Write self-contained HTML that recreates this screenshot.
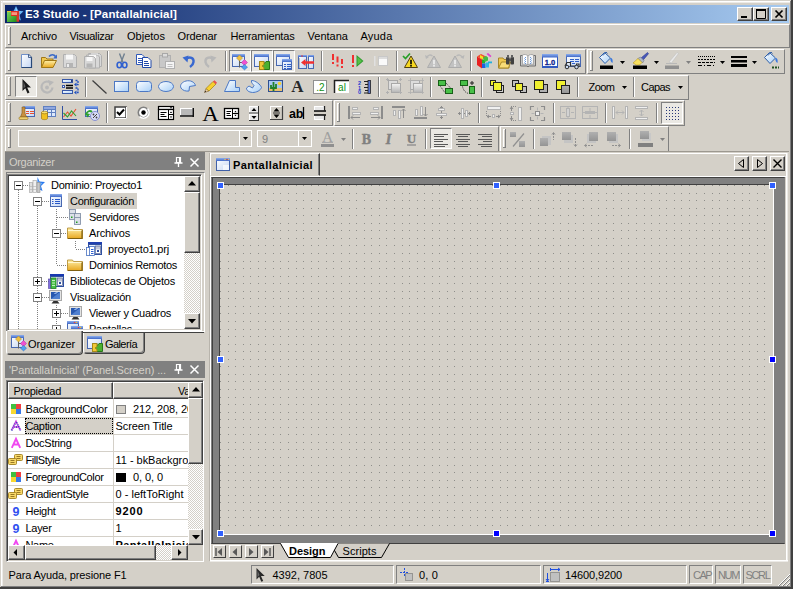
<!DOCTYPE html>
<html lang="es"><head><meta charset="utf-8"><title>E3 Studio - [PantallaInicial]</title>
<style>
html,body{margin:0;padding:0}
body{width:793px;height:589px;position:relative;overflow:hidden;background:#d4d0c8;font-family:"Liberation Sans",sans-serif;font-size:11px;color:#000}
div,svg{position:absolute;box-sizing:border-box}
.t{white-space:nowrap;overflow:visible}
.rb{border:1px solid;border-color:#fff #404040 #404040 #fff;box-shadow:inset -1px -1px 0 #808080,inset 1px 1px 0 #d4d0c8}
.sk{border:1px solid;border-color:#808080 #fff #fff #808080;box-shadow:inset 1px 1px 0 #404040,inset -1px -1px 0 #d4d0c8}
.ts{border:1px solid;border-color:#808080 #fff #fff #808080}
.tr{border:1px solid;border-color:#fff #808080 #808080 #fff}
.dith{background-image:conic-gradient(#fff 25%,#d4d0c8 0 50%,#fff 0 75%,#d4d0c8 0);background-size:2px 2px}
svg{overflow:visible}
</style></head>
<body>
<svg class="i" style="left:0;top:0" width="0" height="0"><defs><linearGradient id="gW" x1="0" y1="0" x2="1" y2="1"><stop offset="0" stop-color="#fff"/><stop offset="1" stop-color="#c4d6f4"/></linearGradient><linearGradient id="gT" x1="0" y1="0" x2="0" y2="1"><stop offset="0" stop-color="#8fb0ee"/><stop offset="1" stop-color="#3f68c8"/></linearGradient><linearGradient id="gY" x1="0" y1="0" x2="0" y2="1"><stop offset="0" stop-color="#fff0a8"/><stop offset="1" stop-color="#e8a820"/></linearGradient><linearGradient id="gB" x1="0" y1="0" x2="1" y2="1"><stop offset="0" stop-color="#ffffff"/><stop offset="1" stop-color="#a8d0f8"/></linearGradient><linearGradient id="gG" x1="0" y1="0" x2="0" y2="1"><stop offset="0" stop-color="#f4f4f4"/><stop offset="1" stop-color="#b4b4b4"/></linearGradient><linearGradient id="gGr" x1="0" y1="0" x2="1" y2="1"><stop offset="0" stop-color="#80d860"/><stop offset="1" stop-color="#1c8c1c"/></linearGradient><linearGradient id="gD" x1="0" y1="0" x2="0" y2="1"><stop offset="0" stop-color="#b0b0b0"/><stop offset="1" stop-color="#949494"/></linearGradient></defs></svg>
<div class="" style="left:1px;top:1px;width:790px;height:1px;background:#fff"></div>
<div class="" style="left:1px;top:1px;width:1px;height:586px;background:#fff"></div>
<div class="" style="left:1px;top:2px;width:789px;height:1px;background:#eceae6"></div>
<div class="" style="left:2px;top:1px;width:1px;height:585px;background:#eceae6"></div>
<div class="" style="left:791px;top:0px;width:1px;height:589px;background:#404040"></div>
<div class="" style="left:792px;top:0px;width:1px;height:589px;background:#404040"></div>
<div class="" style="left:0px;top:587px;width:793px;height:1px;background:#404040"></div>
<div class="" style="left:0px;top:588px;width:793px;height:1px;background:#404040"></div>
<div class="" style="left:790px;top:1px;width:1px;height:586px;background:#808080"></div>
<div class="" style="left:1px;top:586px;width:790px;height:1px;background:#808080"></div>
<div class="" style="left:5px;top:5px;width:784px;height:18px;background:linear-gradient(90deg,#0a246a 0%,#a6caf0 100%)"></div>
<div class="t" style="left:25px;top:6.0px;line-height:16px;font-size:11.5px;font-weight:bold;color:#fff;letter-spacing:0.151px;">E3 Studio - [PantallaInicial]</div>
<svg class="i" style="left:6px;top:5px" width="18" height="18" viewBox="0 0 18 18" ><path d="M9.500 0.500l2.200 4.800 5.300.500-3.900 3.600 1.300 5.600-4.900-3-4.900 3 1.300-5.600-3.900-3.600 5.300-.500z" fill="#68b8f8" transform="translate(0.5,0.5)"/><path d="M10 3l1.300 3.200 3.200.300-2.400 2.200.800 3.300-2.900-1.800z" fill="#a8dcff"/><rect x="1" y="6" width="10" height="11" fill="url(#gGr)"/><path d="M5 6h8.200v10.500h-2.700v-5.500h-5.500z" fill="#e03020"/><path d="M5.500 7.200h5.500v2.800h-5.500z" fill="#f89880"/><path d="M11 6.500h2v10h-2z" fill="#d83828"/><path d="M1 6h4v1h-4z" fill="#e8c030"/></svg>
<div class="rb" style="left:737px;top:7px;width:16px;height:14px;background:#d4d0c8"></div>
<svg class="i" style="left:737px;top:7px" width="16" height="14" viewBox="0 0 16 14" ><rect x="4" y="9" width="6" height="2" fill="#000"/></svg>
<div class="rb" style="left:753px;top:7px;width:16px;height:14px;background:#d4d0c8"></div>
<svg class="i" style="left:753px;top:7px" width="16" height="14" viewBox="0 0 16 14" ><path d="M3.500 3v8.500h9v-8.500z" fill="none" stroke="#000"/><rect x="3" y="2" width="10" height="2" fill="#000"/></svg>
<div class="rb" style="left:771px;top:7px;width:16px;height:14px;background:#d4d0c8"></div>
<svg class="i" style="left:771px;top:7px" width="16" height="14" viewBox="0 0 16 14" ><path d="M4.500 3.500l7 7M11.500 3.500l-7 7" stroke="#000" stroke-width="1.700" fill="none"/></svg>
<div class="" style="left:8px;top:27px;width:1px;height:18px;background:#fff"></div>
<div class="" style="left:9px;top:27px;width:1px;height:18px;background:#d4d0c8"></div>
<div class="" style="left:10px;top:27px;width:1px;height:18px;background:#808080"></div>
<div class="" style="left:8px;top:27px;width:2px;height:1px;background:#fff"></div>
<div class="" style="left:8px;top:44px;width:3px;height:1px;background:#808080"></div>
<div class="t" style="left:21px;top:28.0px;line-height:16px;font-size:11px;color:#000;letter-spacing:-0.097px;">Archivo</div>
<div class="t" style="left:69.5px;top:28.0px;line-height:16px;font-size:11px;color:#000;letter-spacing:-0.348px;">Visualizar</div>
<div class="t" style="left:127px;top:28.0px;line-height:16px;font-size:11px;color:#000;letter-spacing:0.013px;">Objetos</div>
<div class="t" style="left:177.5px;top:28.0px;line-height:16px;font-size:11px;color:#000;letter-spacing:-0.122px;">Ordenar</div>
<div class="t" style="left:230.5px;top:28.0px;line-height:16px;font-size:11px;color:#000;letter-spacing:-0.168px;">Herramientas</div>
<div class="t" style="left:307.5px;top:28.0px;line-height:16px;font-size:11px;color:#000;letter-spacing:0.018px;">Ventana</div>
<div class="t" style="left:360.5px;top:28.0px;line-height:16px;font-size:11px;color:#000;letter-spacing:0.202px;">Ayuda</div>
<div class="tr" style="left:5px;top:24px;width:785px;height:24px;background:transparent"></div>
<div class="tr" style="left:5px;top:49px;width:581px;height:25px;background:transparent"></div>
<div class="tr" style="left:587px;top:49px;width:198px;height:25px;background:transparent"></div>
<div class="tr" style="left:5px;top:75px;width:684px;height:25px;background:transparent"></div>
<div class="tr" style="left:5px;top:100px;width:328px;height:26px;background:transparent"></div>
<div class="tr" style="left:334px;top:100px;width:351px;height:26px;background:transparent"></div>
<div class="tr" style="left:5px;top:126px;width:494px;height:26px;background:transparent"></div>
<div class="tr" style="left:500px;top:126px;width:169px;height:26px;background:transparent"></div>
<div class="" style="left:5px;top:151px;width:784px;height:1px;background:#9c9890"></div>
<div class="" style="left:8px;top:51px;width:1px;height:20px;background:#fff"></div>
<div class="" style="left:9px;top:51px;width:1px;height:20px;background:#d4d0c8"></div>
<div class="" style="left:10px;top:51px;width:1px;height:20px;background:#808080"></div>
<div class="" style="left:8px;top:51px;width:2px;height:1px;background:#fff"></div>
<div class="" style="left:8px;top:70px;width:3px;height:1px;background:#808080"></div>
<svg class="i" style="left:19px;top:53px" width="16" height="16" viewBox="0 0 16 16" ><path d="M2.500 1.500h7l3 3v10h-10z" fill="url(#gW)" stroke="#7090c8"/><path d="M9.500 1.500l3 3v10h-10" fill="none" stroke="#284878" stroke-width="1.200"/><path d="M9.500 1.500v3h3" fill="#dce8ff" stroke="#284878" stroke-width=".800"/></svg>
<svg class="i" style="left:40px;top:53px" width="18" height="16" viewBox="0 0 18 16" ><path d="M1.500 14.500v-10h4l1.500 1.500h6v2" fill="#f0c850" stroke="#a07818"/><path d="M1.500 14.500l3-7h12l-3.500 7z" fill="url(#gY)" stroke="#a07818"/><path d="M9 3.500c2-2.500 5-2.500 6.500 0" fill="none" stroke="#3868c8" stroke-width="1.500"/><path d="M17 1.500v4h-4z" fill="#3868c8"/></svg>
<svg class="i" style="left:62px;top:53px" width="16" height="16" viewBox="0 0 16 16" ><path d="M1.5 1.5h11l2 2v11h-13z" fill="#d8d8d8" stroke="#b0b0b0"/><rect x="4" y="1.5" width="7" height="5" fill="#f8f8f8"/><rect x="4" y="10" width="7" height="4.500" fill="#b4b4b4"/><rect x="5" y="11" width="2" height="3" fill="#ececec"/></svg>
<svg class="i" style="left:84px;top:53px" width="16" height="16" viewBox="0 0 16 16" ><path d="M4.5 0.5h11l2 2v11h-10z" fill="#d8d8d8" stroke="#b0b0b0"/><rect x="7" y="0.5" width="7" height="5" fill="#f8f8f8"/><rect x="7" y="9" width="7" height="4.500" fill="#b4b4b4"/><rect x="8" y="10" width="2" height="3" fill="#ececec"/><path d="M2.5 2.0h11l2 2v11h-10.500z" fill="#d8d8d8" stroke="#b0b0b0"/><rect x="5" y="2.0" width="7" height="5" fill="#f8f8f8"/><rect x="5" y="10.5" width="7" height="4.500" fill="#b4b4b4"/><rect x="6" y="11.5" width="2" height="3" fill="#ececec"/><path d="M0.500 3.500h9l2 2v9.500h-11z" fill="#d8d8d8" stroke="#b0b0b0"/><rect x="2.500" y="4" width="6" height="4" fill="#f8f8f8"/><rect x="2.500" y="10.500" width="6" height="4" fill="#b4b4b4"/></svg>
<div class="" style="left:107px;top:51px;width:1px;height:20px;background:#808080"></div>
<div class="" style="left:108px;top:51px;width:1px;height:20px;background:#fff"></div>
<svg class="i" style="left:116px;top:53px" width="12" height="16" viewBox="0 0 12 16" ><path d="M3.500 0.500l3.500 9M8.500 0.500l-3.500 9" stroke="#708090" stroke-width="1.400" fill="none"/><ellipse cx="3.300" cy="12" rx="2.200" ry="2.700" fill="none" stroke="#3060d0" stroke-width="1.600"/><ellipse cx="8.700" cy="12" rx="2.200" ry="2.700" fill="none" stroke="#3060d0" stroke-width="1.600"/></svg>
<svg class="i" style="left:136px;top:54px" width="16" height="14" viewBox="0 0 16 14" ><path d="M0.5 0.5h5.500l3 3v7h-8.500z" fill="#fff" stroke="#3058b8"/><path d="M2 4.5h4M2 6.5h5M2 8.5h5" stroke="#3058b8"/><path d="M6.5 3.5h5.500l3 3v7h-8.500z" fill="#fff" stroke="#2048a8"/><path d="M8 7.5h4M8 9.5h5M8 11.5h5" stroke="#2048a8"/></svg>
<svg class="i" style="left:158px;top:53px" width="17" height="16" viewBox="0 0 17 16" ><rect x="1.500" y="2.500" width="11" height="12" fill="#c8c8c8" stroke="#b0b0b0"/><rect x="4.500" y="0.500" width="5" height="3.500" fill="#dcdcdc" stroke="#a8a8a8"/><rect x="7.500" y="8.500" width="9" height="7" fill="#f4f4f4" stroke="#b0b0b0"/><path d="M9.500 11.500h5M9.500 13.500h5" stroke="#c0c0c0"/></svg>
<svg class="i" style="left:182px;top:54px" width="13" height="14" viewBox="0 0 13 14" ><path d="M4 5c4-3 8-1 7.500 3c-.3 2.500-2 4-3.500 5" fill="none" stroke="#3868d0" stroke-width="2.400"/><path d="M0.500 3.500l6-2-1 7z" fill="#3868d0"/></svg>
<svg class="i" style="left:204px;top:54px" width="13" height="14" viewBox="0 0 13 14" ><path d="M9 5c-4-3-8-1-7.500 3c.3 2.500 2 4 3.500 5" fill="none" stroke="#b8b8b8" stroke-width="2.400"/><path d="M12.500 3.500l-6-2 1 7z" fill="#b8b8b8"/></svg>
<div class="" style="left:225px;top:51px;width:1px;height:20px;background:#808080"></div>
<div class="" style="left:226px;top:51px;width:1px;height:20px;background:#fff"></div>
<div style="left:229px;top:50px;width:22px;height:22px;background:#eae8e3;border:1px solid;border-color:#808080 #fff #fff #808080"></div>
<svg class="i" style="left:232px;top:54px" width="16" height="16" viewBox="0 0 16 16" ><rect x="0.5" y="0.5" width="12" height="12" fill="url(#gW)" stroke="#4868b0"/><rect x="0" y="0" width="13" height="3" fill="url(#gT)"/><path d="M7.500 4.500v9M7.500 8.500h4" stroke="#606060" fill="none"/><path d="M7.500 1l3 3-3 3-3-3z" fill="#f0c040" stroke="#b08820" stroke-width=".500"/><path d="M12.500 5.500l3 3-3 3-3-3z" fill="#f050d0" stroke="#b030a0" stroke-width=".500"/><path d="M12.500 10.500l3 2.700-3 2.700-3-2.700z" fill="#50a0f0" stroke="#2868b8" stroke-width=".500"/></svg>
<div style="left:251px;top:50px;width:22px;height:22px;background:#eae8e3;border:1px solid;border-color:#808080 #fff #fff #808080"></div>
<svg class="i" style="left:254px;top:54px" width="16" height="16" viewBox="0 0 16 16" ><rect x="0.5" y="0.5" width="14" height="12" fill="url(#gW)" stroke="#4868b0"/><rect x="0" y="0" width="15" height="3" fill="url(#gT)"/><path d="M5.500 7.500h4.500v2.500l2-2.500h3.500v8h-10z" fill="#4cb030" stroke="#287818"/><path d="M5.500 7.500h4.500v3l-2 1.500 2 1.500v2h-4.500z" fill="#f0c838" stroke="#a88818"/></svg>
<div style="left:273px;top:50px;width:22px;height:22px;background:#eae8e3;border:1px solid;border-color:#808080 #fff #fff #808080"></div>
<svg class="i" style="left:276px;top:54px" width="16" height="16" viewBox="0 0 16 16" ><rect x="0.5" y="0.5" width="13" height="11" fill="url(#gW)" stroke="#4868b0"/><rect x="0" y="0" width="14" height="3" fill="url(#gT)"/><rect x="6.5" y="5.5" width="9" height="10" fill="url(#gW)" stroke="#4868b0"/><rect x="6" y="5" width="10" height="3" fill="url(#gT)"/><path d="M8 10.500h2M11 10.500h4M8 12.500h2M11 12.500h4M8 14.500h2M11 14.500h4" stroke="#3060c8" stroke-width="1.200"/></svg>
<svg class="i" style="left:298px;top:55px" width="16" height="14" viewBox="0 0 16 14" ><rect x="0.5" y="0.5" width="8" height="13" fill="url(#gW)" stroke="#4868b0"/><rect x="0" y="0" width="9" height="2" fill="url(#gT)"/><rect x="10.5" y="0.5" width="5" height="13" fill="url(#gW)" stroke="#4868b0"/><rect x="10" y="0" width="6" height="2" fill="url(#gT)"/><circle cx="4" cy="1" r=".800" fill="#f03030"/><path d="M1.500 3.500v9" stroke="#888" stroke-dasharray="1 1"/><path d="M3 7.500l4.500-3.500v2.300h8.500v2.400h-8.500v2.300z" fill="#f03030"/></svg>
<div class="" style="left:320.5px;top:51px;width:1px;height:20px;background:#808080"></div>
<div class="" style="left:321.5px;top:51px;width:1px;height:20px;background:#fff"></div>
<svg class="i" style="left:332px;top:54px" width="12" height="14" viewBox="0 0 12 14" ><rect x="0" y="0" width="2" height="6" fill="#f03030"/><rect x="0" y="8" width="2" height="2" fill="#f03030"/><rect x="4.5" y="2.5" width="2" height="6" fill="#f03030"/><rect x="4.5" y="10.5" width="2" height="2" fill="#f03030"/><rect x="9" y="5" width="2" height="5" fill="#f03030"/><rect x="9" y="12" width="2" height="2" fill="#f03030"/></svg>
<svg class="i" style="left:352px;top:54px" width="12" height="14" viewBox="0 0 12 14" ><rect x="0" y="1" width="2" height="8" fill="#f03030"/><rect x="0" y="11" width="2" height="2" fill="#f03030"/><path d="M4.500 1l7 6-7 6z" fill="#2c9c2c"/><path d="M5.500 3l4.500 4-4.500 4z" fill="#58c048"/></svg>
<svg class="i" style="left:374px;top:55px" width="14" height="12" viewBox="0 0 14 12" ><rect x="0" y="1" width="1.500" height="10" fill="#e0e0e0"/><rect x="4.500" y="1.500" width="9" height="9" fill="#fafafa" stroke="#c8c8c8"/><rect x="5" y="2" width="8" height="2" fill="#dcdcdc"/></svg>
<div class="" style="left:395.5px;top:51px;width:1px;height:20px;background:#808080"></div>
<div class="" style="left:396.5px;top:51px;width:1px;height:20px;background:#fff"></div>
<svg class="i" style="left:402px;top:53px" width="16" height="16" viewBox="0 0 16 16" ><path d="M9 3l6.500 11.500h-13z" fill="#f8d820" stroke="#504010" stroke-linejoin="round"/><rect x="8.2" y="6.8" width="1.600" height="4.500" fill="#000"/><rect x="8.2" y="12" width="1.600" height="1.600" fill="#000"/><path d="M1 3l2.500 2.500 4.500-5" fill="none" stroke="#28a028" stroke-width="1.700"/></svg>
<svg class="i" style="left:425px;top:53px" width="16" height="16" viewBox="0 0 16 16" ><path d="M9 3l6.500 11.500h-13z" fill="#c2c2c2" stroke="#acacac" stroke-linejoin="round"/><rect x="8.2" y="6.8" width="1.600" height="4.500" fill="#f0f0f0"/><rect x="8.2" y="12" width="1.600" height="1.600" fill="#f0f0f0"/><path d="M1.500 4.500c1.500-3 4-3 6-1.500" fill="none" stroke="#b8b8b8" stroke-width="1.300"/><path d="M0 2l1 4 3-2z" fill="#b8b8b8"/></svg>
<svg class="i" style="left:448px;top:53px" width="17" height="16" viewBox="0 0 17 16" ><path d="M7 3l6.500 11.500h-13z" fill="#c2c2c2" stroke="#acacac" stroke-linejoin="round"/><rect x="6.2" y="6.8" width="1.600" height="4.500" fill="#f0f0f0"/><rect x="6.2" y="12" width="1.600" height="1.600" fill="#f0f0f0"/><path d="M8.500 3c2-1.500 4.500-1.500 6 1.500" fill="none" stroke="#b8b8b8" stroke-width="1.300"/><path d="M16.500 2l-1 4-3-2z" fill="#b8b8b8"/></svg>
<div class="" style="left:470px;top:51px;width:1px;height:20px;background:#808080"></div>
<div class="" style="left:471px;top:51px;width:1px;height:20px;background:#fff"></div>
<svg class="i" style="left:476px;top:53px" width="16" height="16" viewBox="0 0 16 16" ><path d="M1 3.500l5 3v9l-5-3.500z" fill="#e82020"/><path d="M1 3.500l4-2.500 6 3-5 2.500z" fill="#f05030"/><path d="M4 2l3 1.500v3l-3-1.500z" fill="#f8e020"/><rect x="6" y="6.500" width="3" height="4" fill="#28b028"/><rect x="6" y="10.500" width="3.500" height="4.500" fill="#2060e0"/><rect x="9.500" y="9.500" width="3.500" height="5" fill="#30b8e8"/><path d="M7 4.500l3-1.500 2 1.500v3l-3 1.500z" fill="#40c040"/><rect x="12" y="8.500" width="4" height="1.800" fill="#20b0e0"/><path d="M10.500 1l1.500-1 3.500 3-1.200 1.200z" fill="#e040d0"/></svg>
<svg class="i" style="left:498px;top:54px" width="17" height="15" viewBox="0 0 17 15" ><path d="M0.500 14v-10h4.500l1 1.500h5v8.500z" fill="#f0c850" stroke="#a88828"/><path d="M0.500 14l3-6h9l-2 6z" fill="#f8dc78" stroke="#a88828"/><rect x="8" y="3" width="3.500" height="7.500" rx="1" fill="#404040"/><rect x="12.500" y="3" width="3.500" height="7.500" rx="1" fill="#404040"/><rect x="9" y="1" width="2" height="3" fill="#606060"/><rect x="13" y="1" width="2" height="3" fill="#606060"/><rect x="11" y="4.500" width="2" height="2.500" fill="#505050"/></svg>
<svg class="i" style="left:520px;top:54px" width="16" height="13" viewBox="0 0 16 13" ><path d="M0.500 1.500h2l5.500 1.500 5.500-1.500h2v10.500h-6.500l-1 1-1-1h-6.500z" fill="#c8c8c8" stroke="#707070"/><path d="M2.500 1c2-1 4-.5 5.500 1v9c-1.500-1-3.500-1.500-5.500-.5z" fill="#fff" stroke="#909090" stroke-width=".700"/><path d="M13.500 1c-2-1-4-.5-5.500 1v9c1.500-1 3.500-1.500 5.500-.5z" fill="#f4f4f4" stroke="#909090" stroke-width=".700"/><path d="M5.500 3v7M10.500 3v7" stroke="#6898e0" stroke-dasharray="1 1"/><path d="M4.500 4v5M11.500 4v5" stroke="#a8c8f0" stroke-dasharray="1 1"/></svg>
<svg class="i" style="left:542px;top:54px" width="16" height="14" viewBox="0 0 16 14" ><rect x="0.500" y="0.500" width="15" height="13" fill="#fff" stroke="#3058c0"/><rect x="0" y="0" width="16" height="3.500" fill="url(#gT)"/><rect x="1" y="12" width="14" height="2" fill="#3058c0"/><text x="8" y="10.500" font-family="Liberation Sans,sans-serif" font-size="7.500" font-weight="bold" fill="#102890" stroke="#102890" stroke-width=".300" text-anchor="middle">1.0</text></svg>
<svg class="i" style="left:564px;top:54px" width="17" height="15" viewBox="0 0 17 15" ><rect x="2.500" y="0.500" width="14" height="12" fill="url(#gW)" stroke="#4868b0"/><rect x="2" y="0" width="15" height="3" fill="url(#gT)"/><path d="M6 5.500h4M11 5.500h4M6 7.500h4M11 7.500h4M8 9.500h3" stroke="#3060c8" stroke-width="1.200"/><path d="M1 12l2-3.500h3.500v3.500h6v-2h2.500v3" fill="none" stroke="#303030" stroke-width="1.200"/><circle cx="3" cy="13" r="1.800" fill="#c8d8f0" stroke="#303030"/><circle cx="12.500" cy="13" r="1.800" fill="#c8d8f0" stroke="#303030"/></svg>
<div class="" style="left:590px;top:51px;width:1px;height:20px;background:#fff"></div>
<div class="" style="left:591px;top:51px;width:1px;height:20px;background:#d4d0c8"></div>
<div class="" style="left:592px;top:51px;width:1px;height:20px;background:#808080"></div>
<div class="" style="left:590px;top:51px;width:2px;height:1px;background:#fff"></div>
<div class="" style="left:590px;top:70px;width:3px;height:1px;background:#808080"></div>
<svg class="i" style="left:599px;top:52px" width="16" height="17" viewBox="0 0 16 17" ><path d="M0.5 5.5l5-5 6 5.500-5.500 5.500z" fill="url(#gB)" stroke="#3060a8"/><path d="M4 3.5l3-3.500 1.500 1.500" fill="none" stroke="#3060a8"/><path d="M11.5 6c2 0 2.500 2 2 5c-1.500-1-2.500-2.500-2-5z" fill="#3878e0"/><rect x="1" y="13.500" width="13" height="3.500" fill="#000"/></svg>
<svg class="i" style="left:632px;top:52px" width="17" height="17" viewBox="0 0 17 17" ><path d="M9 6l6.500-5.500 1 1.200-5.500 6.500z" fill="#4858b8" stroke="#283890" stroke-width=".600"/><path d="M6 6.500l2.500-1.500 3.500 3.500-1.500 2.500z" fill="#b0b8c8" stroke="#707888" stroke-width=".600"/><path d="M1 11l5-4.500 4 4-2.500 2.500h-3z" fill="#f8e060" stroke="#b89820" stroke-width=".600"/><rect x="1" y="13.500" width="14" height="3.500" fill="#000"/></svg>
<svg class="i" style="left:664px;top:52px" width="16" height="17" viewBox="0 0 16 17" ><path d="M5 10l8-9.500 1.500 1-7 9.500z" fill="#e8e8e8" stroke="#c0c0c0" stroke-width=".600"/><path d="M2 11.500h11" stroke="#b8b8b8"/><rect x="1" y="13.500" width="14" height="3.500" fill="#909090"/></svg>
<svg class="i" style="left:698px;top:56px" width="17" height="11" viewBox="0 0 17 11" ><path d="M0 0.500h17" stroke="#000" stroke-dasharray="1 1"/><path d="M0 3.500h17" stroke="#000" stroke-dasharray="2 1"/><path d="M0 6.500h17" stroke="#000" stroke-dasharray="3 1"/><path d="M0 9.500h17" stroke="#000" stroke-dasharray="4 2 1 2"/></svg>
<svg class="i" style="left:731px;top:56px" width="16" height="11" viewBox="0 0 16 11" ><rect x="0" y="0" width="16" height="2" fill="#000"/><rect x="0" y="4" width="16" height="2.500" fill="#000"/><rect x="0" y="8" width="16" height="3" fill="#000"/></svg>
<svg class="i" style="left:764px;top:52px" width="16" height="17" viewBox="0 0 16 17" ><path d="M0.5 5.5l5-5 6 5.500-5.500 5.500z" fill="url(#gB)" stroke="#3060a8"/><path d="M4 3.5l3-3.500 1.500 1.500" fill="none" stroke="#3060a8"/><path d="M11.5 6c2 0 2.500 2 2 5c-1.500-1-2.500-2.500-2-5z" fill="#3878e0"/><path d="M8 15.500h7" stroke="#205020" stroke-width="2" stroke-dasharray="2 1"/></svg>
<svg class="i" style="left:620px;top:61px" width="5" height="3" viewBox="0 0 5 3" ><path d="M0 0h5l-2.5 3z" fill="#000"/></svg>
<svg class="i" style="left:654px;top:61px" width="5" height="3" viewBox="0 0 5 3" ><path d="M0 0h5l-2.5 3z" fill="#000"/></svg>
<svg class="i" style="left:686px;top:61px" width="5" height="3" viewBox="0 0 5 3" ><path d="M0 0h5l-2.5 3z" fill="#808080"/></svg>
<svg class="i" style="left:720px;top:61px" width="5" height="3" viewBox="0 0 5 3" ><path d="M0 0h5l-2.5 3z" fill="#000"/></svg>
<svg class="i" style="left:752px;top:61px" width="5" height="3" viewBox="0 0 5 3" ><path d="M0 0h5l-2.5 3z" fill="#000"/></svg>
<div class="" style="left:8px;top:77px;width:1px;height:19px;background:#fff"></div>
<div class="" style="left:9px;top:77px;width:1px;height:19px;background:#d4d0c8"></div>
<div class="" style="left:10px;top:77px;width:1px;height:19px;background:#808080"></div>
<div class="" style="left:8px;top:77px;width:2px;height:1px;background:#fff"></div>
<div class="" style="left:8px;top:95px;width:3px;height:1px;background:#808080"></div>
<div style="left:15px;top:76px;width:22px;height:21px;background:#eae8e3;border:1px solid;border-color:#808080 #fff #fff #808080"></div>
<svg class="i" style="left:22px;top:79px" width="9" height="15" viewBox="0 0 9 15" ><path d="M0.500 0v12l2.800-2.800 2.200 5.300 2-1-2.300-5h3.800z" fill="#181818"/><path d="M1.500 2.500v7l2-2z" fill="#606060"/></svg>
<svg class="i" style="left:40px;top:80px" width="15" height="14" viewBox="0 0 15 14" ><path d="M12.500 7.500a5.500 5.500 0 1 1-3.500-5.600" fill="none" stroke="#b8b8b8" stroke-width="2.200"/><path d="M8 0l6 2-4.500 4z" fill="#b8b8b8"/><circle cx="7" cy="7.500" r="1.900" fill="#b8b8b8"/></svg>
<svg class="i" style="left:62px;top:79px" width="17" height="15" viewBox="0 0 17 15" ><rect x="0.500" y="0.500" width="10" height="3" fill="url(#gB)" stroke="#3858a8"/><rect x="9" y="1" width="1.500" height="2" fill="#283878"/><rect x="0.500" y="6.500" width="2" height="2" fill="#fff" stroke="#3858a8"/><path d="M4 6.500h7M4 9h7" stroke="#000" stroke-width="1.300"/><rect x="0.500" y="11.500" width="10" height="3" fill="url(#gB)" stroke="#3858a8"/><path d="M13.500 1.500h2.500v4h-2.500M13.500 9h2.500v4.500h-2.500" fill="none" stroke="#2050c0" stroke-width="1.300" stroke-dasharray="2 1"/><path d="M12 5.500l2.500-2v4zM12 13.500l2.500-2v4z" fill="#2050c0"/></svg>
<div class="" style="left:84.5px;top:76.5px;width:1px;height:20px;background:#808080"></div>
<div class="" style="left:85.5px;top:76.5px;width:1px;height:20px;background:#fff"></div>
<svg class="i" style="left:92px;top:80px" width="15" height="14" viewBox="0 0 15 14" ><path d="M0.500 0.500l14 13" stroke="#404040" stroke-width="1.300"/></svg>
<svg class="i" style="left:114px;top:81px" width="15" height="11" viewBox="0 0 15 11" ><rect x="0.500" y="0.500" width="14" height="10" fill="url(#gB)" stroke="#4c78c4"/></svg>
<svg class="i" style="left:136px;top:81px" width="16" height="11" viewBox="0 0 16 11" ><rect x="0.500" y="0.500" width="15" height="10" rx="3" fill="url(#gB)" stroke="#4c78c4"/></svg>
<svg class="i" style="left:158px;top:81px" width="16" height="11" viewBox="0 0 16 11" ><ellipse cx="8" cy="5.500" rx="7.500" ry="5" fill="url(#gB)" stroke="#4c78c4"/></svg>
<svg class="i" style="left:180px;top:80px" width="16" height="12" viewBox="0 0 16 12" ><path d="M15.500 5.500c-1-3.500-5-5.500-9.500-4.500c-4 1-6.500 4-5 7c1.500 2.500 5 3.500 8 3l.500-4.500z" fill="url(#gB)" stroke="#4c78c4"/></svg>
<svg class="i" style="left:204px;top:80px" width="13" height="13" viewBox="0 0 13 13" ><path d="M0.500 12.500l1.500-4 3 2.500z" fill="#f0d0a0" stroke="#806030" stroke-width=".600"/><path d="M2 8.500l7-7 3 2.500-7 7z" fill="#f8d030" stroke="#a08010" stroke-width=".700"/><path d="M9 1.500l1.500-1.300 2.500 2.500-1.200 1.500z" fill="#e85050"/><path d="M0.500 12.500l.800-1.800 1 .900z" fill="#202020"/></svg>
<svg class="i" style="left:224px;top:80px" width="16" height="12" viewBox="0 0 16 12" ><path d="M5.500 0.500h6v7h4v4h-15z" fill="url(#gB)" stroke="#4c78c4"/></svg>
<svg class="i" style="left:246px;top:80px" width="16" height="13" viewBox="0 0 16 13" ><path d="M5.500 0.500c4 0 9 4 10 7c-1 3-5 5-9 5c-4-.5-6-2-6-4.500l2.500-2 3.500 2 1.500-2.500c-1-1.500-3-2.500-2.500-5z" fill="url(#gB)" stroke="#4c78c4"/></svg>
<svg class="i" style="left:268px;top:80px" width="15" height="12" viewBox="0 0 15 12" ><rect x="0.500" y="0.500" width="14" height="11" fill="#a8c8f0" stroke="#305090"/><rect x="1" y="8" width="13" height="3" fill="#e8c070"/><circle cx="11.500" cy="3.500" r="1.800" fill="#f8d030"/><path d="M5.500 2v9M3 5v3h5v-4" fill="none" stroke="#208028" stroke-width="1.800"/></svg>
<svg class="i" style="left:291px;top:80px" width="13" height="13" viewBox="0 0 13 13" ><text x="6.500" y="12" font-family="Liberation Serif,serif" font-size="17" font-weight="bold" fill="#282828" text-anchor="middle">A</text></svg>
<svg class="i" style="left:313px;top:80px" width="14" height="14" viewBox="0 0 14 14" ><rect x="0.500" y="0.500" width="13" height="13" fill="#fff" stroke="#909090"/><text x="7.500" y="11" font-family="Liberation Sans,sans-serif" font-size="10" fill="#109010" text-anchor="middle">.2</text></svg>
<svg class="i" style="left:334px;top:80px" width="15" height="13" viewBox="0 0 15 13" ><rect x="1" y="1" width="14" height="12" fill="#fff"/><path d="M0.500 13v-12.500h14.500" fill="none" stroke="#202020" stroke-width="1.500"/><text x="8" y="11" font-family="Liberation Sans,sans-serif" font-size="10" fill="#109010" text-anchor="middle">al</text></svg>
<svg class="i" style="left:358px;top:80px" width="13" height="14" viewBox="0 0 13 14" ><text x="0" y="4.500" font-family="Liberation Sans,sans-serif" font-size="5.500" font-weight="bold" fill="#1838d0">2</text><text x="0" y="9.500" font-family="Liberation Sans,sans-serif" font-size="5.500" font-weight="bold" fill="#1838d0">1</text><text x="0" y="14" font-family="Liberation Sans,sans-serif" font-size="5.500" font-weight="bold" fill="#1838d0">0</text><rect x="10" y="0.500" width="2.500" height="13" fill="#5878d8" stroke="#202020" stroke-width=".800"/><path d="M6 1.500h4M7 4.500h3M6 7.500h4M7 10.500h3M6 13h4" stroke="#202020"/></svg>
<div class="" style="left:378px;top:76.5px;width:1px;height:20px;background:#808080"></div>
<div class="" style="left:379px;top:76.5px;width:1px;height:20px;background:#fff"></div>
<svg class="i" style="left:386px;top:78px" width="16" height="16" viewBox="0 0 16 16" ><rect x="2.5" y="2.5" width="9" height="9" fill="#dcdcdc" stroke="#a8a8a8"/><rect x="5.5" y="5.5" width="9" height="9" fill="url(#gG)" stroke="#a8a8a8"/><path d="M0 1.500h3M1.500 0v3M13 1.500h3M14.500 0v3M0 14.500h3M1.500 13v3M13 14.500h3M14.500 13v3" stroke="#b0b0b0"/></svg>
<svg class="i" style="left:408px;top:78px" width="16" height="16" viewBox="0 0 16 16" ><rect x="2.5" y="2.5" width="9" height="9" fill="#dcdcdc" stroke="#a8a8a8"/><rect x="5.5" y="5.5" width="9" height="9" fill="url(#gG)" stroke="#a8a8a8"/><path d="M0 2.500h16M2.500 0v16M0 14.500h16M14.500 0v16" stroke="#b0b0b0" stroke-opacity=".800"/></svg>
<div class="" style="left:430px;top:76.5px;width:1px;height:20px;background:#808080"></div>
<div class="" style="left:431px;top:76.5px;width:1px;height:20px;background:#fff"></div>
<svg class="i" style="left:438px;top:80px" width="15" height="14" viewBox="0 0 15 14" ><rect x="0.500" y="0.500" width="7" height="5" fill="#48c048" stroke="#186018"/><rect x="7.500" y="8.500" width="7" height="5" fill="#48c048" stroke="#186018"/><path d="M2.500 6.500l5 7M8 3l4.500 5" stroke="#303030" stroke-dasharray="1 1" fill="none"/></svg>
<svg class="i" style="left:460px;top:80px" width="15" height="14" viewBox="0 0 15 14" ><rect x="0.500" y="0.500" width="7" height="5" fill="#48c048" stroke="#186018"/><rect x="9.500" y="6.500" width="5" height="7" fill="#48c048" stroke="#186018"/><path d="M2.500 6.500c1 4 3 6.500 6.500 7" stroke="#303030" stroke-dasharray="1 1" fill="none"/><path d="M10 3h4M12 1v4" stroke="#202020"/></svg>
<div class="" style="left:481px;top:76.5px;width:1px;height:20px;background:#808080"></div>
<div class="" style="left:482px;top:76.5px;width:1px;height:20px;background:#fff"></div>
<svg class="i" style="left:490px;top:80px" width="15" height="13" viewBox="0 0 15 13" ><rect x="6.5" y="5.5" width="7" height="7" fill="#d0d0d0" stroke="#202020"/><rect x="0.5" y="0.5" width="5" height="5" fill="#f0f030" stroke="#202020"/><rect x="3.5" y="2.5" width="8" height="8" fill="#f0f030" stroke="#202020"/></svg>
<svg class="i" style="left:512px;top:80px" width="15" height="13" viewBox="0 0 15 13" ><rect x="0.5" y="0.5" width="6" height="6" fill="#c0c0c0" stroke="#202020"/><rect x="8.5" y="6.5" width="6" height="6" fill="#c0c0c0" stroke="#202020"/><rect x="3.5" y="3.5" width="7" height="7" fill="#f0f030" stroke="#202020"/></svg>
<svg class="i" style="left:534px;top:80px" width="14" height="13" viewBox="0 0 14 13" ><rect x="5.5" y="4.5" width="8" height="8" fill="#b0b0b0" stroke="#202020"/><rect x="0.5" y="0.5" width="9" height="9" fill="#f0f030" stroke="#202020"/></svg>
<svg class="i" style="left:556px;top:80px" width="14" height="13" viewBox="0 0 14 13" ><rect x="0.5" y="0.5" width="9" height="9" fill="#f0f030" stroke="#202020"/><rect x="5.5" y="5.5" width="8" height="8" fill="url(#gD)" stroke="#202020"/></svg>
<div class="" style="left:577px;top:76.5px;width:1px;height:20px;background:#808080"></div>
<div class="" style="left:578px;top:76.5px;width:1px;height:20px;background:#fff"></div>
<div class="t" style="left:588.5px;top:79.0px;line-height:16px;font-size:11px;color:#000;letter-spacing:-0.529px;">Zoom</div>
<svg class="i" style="left:622px;top:86px" width="5" height="3" viewBox="0 0 5 3" ><path d="M0 0h5l-2.5 3z" fill="#000"/></svg>
<div class="" style="left:632.5px;top:76.5px;width:1px;height:20px;background:#808080"></div>
<div class="" style="left:633.5px;top:76.5px;width:1px;height:20px;background:#fff"></div>
<div class="t" style="left:641px;top:79.0px;line-height:16px;font-size:11px;color:#000;letter-spacing:-0.559px;">Capas</div>
<svg class="i" style="left:678px;top:86px" width="5" height="3" viewBox="0 0 5 3" ><path d="M0 0h5l-2.5 3z" fill="#000"/></svg>
<div class="" style="left:8px;top:103px;width:1px;height:19px;background:#fff"></div>
<div class="" style="left:9px;top:103px;width:1px;height:19px;background:#d4d0c8"></div>
<div class="" style="left:10px;top:103px;width:1px;height:19px;background:#808080"></div>
<div class="" style="left:8px;top:103px;width:2px;height:1px;background:#fff"></div>
<div class="" style="left:8px;top:121px;width:3px;height:1px;background:#808080"></div>
<svg class="i" style="left:19px;top:106px" width="16" height="14" viewBox="0 0 16 14" ><rect x="4.5" y="0.5" width="11" height="10" fill="url(#gW)" stroke="#4868b0"/><rect x="4" y="0" width="12" height="3" fill="url(#gT)"/><path d="M7 5.500h3M11 5.500h4M7 7.500h3M11 7.500h4" stroke="#e85030" stroke-width="1.200"/><path d="M3 1h3v6l1.500 4h-6l1.500-4z" fill="#c89040" stroke="#805818" stroke-width=".600"/><rect x="0" y="11" width="9" height="2.500" rx="1" fill="#f0d070" stroke="#907020" stroke-width=".600"/></svg>
<svg class="i" style="left:41px;top:106px" width="15" height="14" viewBox="0 0 15 14" ><rect x="2.500" y="0.500" width="12" height="10" fill="#dce8fc" stroke="#6080c0"/><path d="M2.500 3.500h12M2.500 6.500h12M6.500 0.500v10M10.500 0.500v10" stroke="#6080c0"/><rect x="3" y="1" width="11" height="2" fill="#90a8e0"/><path d="M0.500 6.500v6c0 1.500 6 1.500 6 0v-6z" fill="#f0c020" stroke="#a07810" stroke-width=".700"/><ellipse cx="3.500" cy="6.500" rx="3" ry="1.300" fill="#f8e070" stroke="#a07810" stroke-width=".700"/></svg>
<svg class="i" style="left:62px;top:106px" width="15" height="14" viewBox="0 0 15 14" ><path d="M0.500 0v13.500h14.500" fill="none" stroke="#3050a0"/><path d="M1.500 11l4-5 3.500 4 5-7" fill="none" stroke="#e85030" stroke-width="1.100"/><path d="M1.500 7l4 4 4-6 4.500 5" fill="none" stroke="#30a030" stroke-width="1.100"/></svg>
<svg class="i" style="left:84px;top:106px" width="16" height="15" viewBox="0 0 16 15" ><rect x="1.5" y="0.5" width="12" height="10" fill="url(#gW)" stroke="#4868b0"/><rect x="1" y="0" width="13" height="3" fill="url(#gT)"/><path d="M2 9c1-4 4-5 6-3" fill="none" stroke="#30a030" stroke-width="1.800"/><path d="M1 7l2.500 4.500 2.500-3.500z" fill="#30a030"/><circle cx="11" cy="10" r="4.500" fill="#d8dcf8" stroke="#8890d0"/><path d="M9 12l4-4" stroke="#404040"/><circle cx="9.500" cy="8.500" r=".900" fill="#404040"/><circle cx="12.500" cy="11.500" r=".900" fill="#404040"/></svg>
<div class="" style="left:106px;top:103px;width:1px;height:20px;background:#808080"></div>
<div class="" style="left:107px;top:103px;width:1px;height:20px;background:#fff"></div>
<svg class="i" style="left:114px;top:106px" width="13" height="13" viewBox="0 0 13 13" ><rect x="1" y="1" width="11" height="11" fill="#fff" stroke="#404040" stroke-width="1.500"/><path d="M3 6l2.500 2.500 4.500-5" fill="none" stroke="#000" stroke-width="2"/><path d="M12.500 1v11.500h-11.500" fill="none" stroke="#fff"/></svg>
<svg class="i" style="left:137px;top:106px" width="13" height="13" viewBox="0 0 13 13" ><circle cx="6.500" cy="6.500" r="5.200" fill="#fff" stroke="#808080" stroke-width="1.600"/><path d="M2.500 10.500a5.600 5.600 0 0 0 8-8" fill="none" stroke="#fff" stroke-width="1.500"/><circle cx="6.500" cy="6.500" r="2.200" fill="#000"/></svg>
<svg class="i" style="left:158px;top:106px" width="16" height="14" viewBox="0 0 16 14" ><rect x="0.500" y="0.500" width="15" height="3" fill="#fff" stroke="#000" stroke-width="1.200"/><path d="M11.800 1.300h2.400l-1.200 1.400z" fill="#000"/><rect x="0.500" y="3.500" width="15" height="10" fill="#fff" stroke="#000" stroke-width="1.200"/><path d="M10.500 4v9.500" stroke="#000"/><path d="M10.500 8.500h5" stroke="#000"/><path d="M2.500 6.500h6M2.500 8.500h4M2.500 10.500h6" stroke="#000"/><path d="M11.800 7l1.200-1.400 1.200 1.400zM11.800 10.500l1.200 1.400 1.200-1.400z" fill="#000"/></svg>
<svg class="i" style="left:180px;top:108px" width="14" height="9" viewBox="0 0 14 9" ><rect x="0.500" y="0.500" width="12.500" height="7.500" fill="url(#gG)" stroke="#fff"/><rect x="1" y="1" width="11.500" height="6.500" fill="#b8b8b8"/><path d="M0 8h14M13.250 0v9" stroke="#101010" stroke-width="1.500"/></svg>
<svg class="i" style="left:202px;top:106px" width="17" height="15" viewBox="0 0 17 15" ><text x="8.500" y="14.500" font-family="Liberation Serif,serif" font-size="21" fill="#000" text-anchor="middle" textLength="16.500" lengthAdjust="spacingAndGlyphs">A</text></svg>
<svg class="i" style="left:224px;top:108px" width="15" height="11" viewBox="0 0 15 11" ><rect x="0.500" y="0.500" width="14" height="10" fill="#fff" stroke="#000" stroke-width="1.300"/><path d="M8.500 1v9M8.500 5.500h6" stroke="#000"/><path d="M2.500 3.500h4.500M2.500 5.500h3.500M2.500 7.500h4.500" stroke="#000"/><path d="M10.300 4.200l1.200-1.400 1.200 1.400zM10.300 6.800l1.200 1.400 1.200-1.400z" fill="#000"/></svg>
<svg class="i" style="left:249px;top:106px" width="10" height="15" viewBox="0 0 10 15" ><rect x="0.500" y="0.500" width="9" height="6.500" fill="#e8e8e8" stroke="#fff"/><rect x="0.500" y="8" width="9" height="6.500" fill="#e8e8e8" stroke="#fff"/><path d="M0 7h10M9.500 0v15M0 14.500h10" stroke="#303030"/><path d="M2.500 5l2.500-3 2.500 3zM2.500 10l2.500 3 2.500-3z" fill="#000"/></svg>
<svg class="i" style="left:270px;top:106px" width="13" height="14" viewBox="0 0 13 14" ><rect x="0.500" y="0.500" width="12" height="13" fill="#d0ccc4" stroke="#fff"/><path d="M0 13.500h13M12.500 0v14" stroke="#404040" stroke-width="1.200"/><path d="M3.500 5.500l3-3.500 3 3.500zM3.500 8.500l3 3.500 3-3.500z" fill="#000"/><path d="M3 7h7" stroke="#000" stroke-width=".800"/></svg>
<svg class="i" style="left:289px;top:107px" width="16" height="12" viewBox="0 0 16 12" ><text x="0" y="10.500" font-family="Liberation Sans,sans-serif" font-size="12.500" font-weight="bold" fill="#000" letter-spacing="-0.3">ab</text><path d="M14.500 0v12" stroke="#000" stroke-width="1.300"/></svg>
<svg class="i" style="left:314px;top:106px" width="12" height="14" viewBox="0 0 12 14" ><rect x="0.500" y="0.500" width="9" height="4" fill="#e8e8e8" stroke="#fff"/><rect x="0.500" y="9.500" width="9" height="4" fill="#e8e8e8" stroke="#fff"/><path d="M0 5h12M0 9h12" stroke="#000" stroke-width="1.600"/><path d="M10.500 0v5M10.500 9v5" stroke="#202020" stroke-width="1.300"/></svg>
<div class="" style="left:337px;top:103px;width:1px;height:19px;background:#fff"></div>
<div class="" style="left:338px;top:103px;width:1px;height:19px;background:#d4d0c8"></div>
<div class="" style="left:339px;top:103px;width:1px;height:19px;background:#808080"></div>
<div class="" style="left:337px;top:103px;width:2px;height:1px;background:#fff"></div>
<div class="" style="left:337px;top:121px;width:3px;height:1px;background:#808080"></div>
<svg class="i" style="left:348px;top:106px" width="13" height="13" viewBox="0 0 13 13" ><path d="M1 0v13" stroke="#8c8c8c" stroke-width="2"/><rect x="4.5" y="1.5" width="5" height="2" fill="#f0f0f0" stroke="#b4b4b4"/><rect x="4.5" y="6.5" width="8" height="2" fill="#f0f0f0" stroke="#b4b4b4"/><path d="M3 11.500h9M5 9.500l-2 2 2 2" stroke="#8c8c8c" fill="none"/></svg>
<svg class="i" style="left:370px;top:106px" width="13" height="13" viewBox="0 0 13 13" ><path d="M12 0v13" stroke="#8c8c8c" stroke-width="2"/><rect x="3.5" y="1.5" width="5" height="2" fill="#f0f0f0" stroke="#b4b4b4"/><rect x="0.5" y="6.5" width="8" height="2" fill="#f0f0f0" stroke="#b4b4b4"/><path d="M1 11.500h9M8 9.500l2 2-2 2" stroke="#8c8c8c" fill="none"/></svg>
<svg class="i" style="left:392px;top:106px" width="13" height="13" viewBox="0 0 13 13" ><path d="M0 1h13" stroke="#8c8c8c" stroke-width="2"/><rect x="1.5" y="4.5" width="2" height="5" fill="#f0f0f0" stroke="#b4b4b4"/><rect x="6.5" y="4.5" width="2" height="8" fill="#f0f0f0" stroke="#b4b4b4"/><path d="M11.500 3v9M9.500 5l2-2 2 2" stroke="#8c8c8c" fill="none"/></svg>
<svg class="i" style="left:414px;top:106px" width="13" height="13" viewBox="0 0 13 13" ><path d="M0 12h13" stroke="#8c8c8c" stroke-width="2"/><rect x="1.5" y="3.5" width="2" height="6" fill="#f0f0f0" stroke="#b4b4b4"/><rect x="6.5" y="0.5" width="2" height="9" fill="#f0f0f0" stroke="#b4b4b4"/><path d="M11.500 1v9M9.500 8l2 2 2-2" stroke="#8c8c8c" fill="none"/></svg>
<svg class="i" style="left:436px;top:106px" width="11" height="13" viewBox="0 0 11 13" ><path d="M5.500 0v13" stroke="#8c8c8c"/><rect x="2.5" y="2.5" width="6" height="2" fill="#f0f0f0" stroke="#b4b4b4"/><rect x="0.5" y="7.5" width="10" height="2" fill="#f0f0f0" stroke="#b4b4b4"/><path d="M4 1.500h3M4 11.500h3" stroke="#8c8c8c"/></svg>
<svg class="i" style="left:458px;top:108px" width="13" height="11" viewBox="0 0 13 11" ><path d="M0 5.500h13" stroke="#8c8c8c"/><rect x="3.5" y="0.5" width="2" height="10" fill="#f0f0f0" stroke="#b4b4b4"/><rect x="7.5" y="2.5" width="2" height="6" fill="#f0f0f0" stroke="#b4b4b4"/><path d="M1.500 4v3M11.500 4v3" stroke="#8c8c8c"/></svg>
<div class="" style="left:478px;top:103px;width:1px;height:20px;background:#808080"></div>
<div class="" style="left:479px;top:103px;width:1px;height:20px;background:#fff"></div>
<svg class="i" style="left:486px;top:106px" width="15" height="13" viewBox="0 0 15 13" ><rect x="1.5" y="0.5" width="13" height="3" fill="#f0f0f0" stroke="#b4b4b4"/><path d="M0.500 5v6M14.500 5v6" stroke="#8c8c8c" stroke-dasharray="1 1"/><path d="M1 10.500h4M10 10.500h4M3 9l-2 1.500 2 1.500M12 9l2 1.500-2 1.500" stroke="#8c8c8c" fill="none"/><rect x="6.5" y="8.5" width="2" height="3" fill="#f0f0f0" stroke="#b4b4b4"/></svg>
<svg class="i" style="left:509px;top:106px" width="13" height="15" viewBox="0 0 13 15" ><rect x="9.5" y="1.5" width="3" height="13" fill="#f0f0f0" stroke="#b4b4b4"/><path d="M2 0.500h6M2 14.500h6" stroke="#8c8c8c" stroke-dasharray="1 1"/><path d="M2.500 1v4M2.500 10v4M1 3l1.500-2 1.500 2M1 12l1.500 2 1.500-2" stroke="#8c8c8c" fill="none"/><rect x="1.5" y="6.5" width="3" height="2" fill="#f0f0f0" stroke="#b4b4b4"/></svg>
<svg class="i" style="left:530px;top:106px" width="15" height="15" viewBox="0 0 15 15" ><path d="M0.500 4v-3.500h3.500M11 0.500h3.500v3.500M14.500 11v3.500h-3.500M4 14.500h-3.500v-3.500" stroke="#8c8c8c" fill="none" stroke-width="1.200"/><rect x="5.500" y="5.500" width="4" height="4" fill="#f0f0f0" stroke="#8c8c8c"/><path d="M7.500 1.500v3M7.500 10.500v3M1.500 7.500h3M10.500 7.500h3" stroke="#b4b4b4"/></svg>
<div class="" style="left:552.5px;top:103px;width:1px;height:20px;background:#808080"></div>
<div class="" style="left:553.5px;top:103px;width:1px;height:20px;background:#fff"></div>
<svg class="i" style="left:560px;top:106px" width="16" height="13" viewBox="0 0 16 13" ><rect x="0.500" y="0.500" width="15" height="12" fill="none" stroke="#b4b4b4"/><rect x="6.5" y="2.5" width="3" height="8" fill="#f0f0f0" stroke="#b4b4b4"/><path d="M8 0v13M2 6.500h3M11 6.500h3" stroke="#b4b4b4"/></svg>
<svg class="i" style="left:582px;top:106px" width="16" height="13" viewBox="0 0 16 13" ><rect x="0.500" y="0.500" width="15" height="12" fill="none" stroke="#b4b4b4"/><rect x="3.5" y="5.5" width="9" height="2" fill="#f0f0f0" stroke="#b4b4b4"/><path d="M0 6.500h16M8 2v3M8 9v3" stroke="#b4b4b4"/></svg>
<div class="" style="left:604.5px;top:103px;width:1px;height:20px;background:#808080"></div>
<div class="" style="left:605.5px;top:103px;width:1px;height:20px;background:#fff"></div>
<svg class="i" style="left:612px;top:106px" width="16" height="13" viewBox="0 0 16 13" ><rect x="0.5" y="0.5" width="2" height="12" fill="#f0f0f0" stroke="#b4b4b4"/><rect x="13.5" y="0.5" width="2" height="12" fill="#f0f0f0" stroke="#b4b4b4"/><path d="M4 6.500h8M6 4.500l-2 2 2 2M10 4.500l2 2-2 2" stroke="#b4b4b4" fill="none"/></svg>
<svg class="i" style="left:635px;top:106px" width="13" height="14" viewBox="0 0 13 14" ><rect x="0.5" y="0.5" width="12" height="2" fill="#f0f0f0" stroke="#b4b4b4"/><rect x="0.5" y="11.5" width="12" height="2" fill="#f0f0f0" stroke="#b4b4b4"/><path d="M6.500 4v6M4.500 6l2-2 2 2M4.500 8l2 2 2-2" stroke="#b4b4b4" fill="none"/></svg>
<div class="" style="left:656px;top:103px;width:1px;height:20px;background:#808080"></div>
<div class="" style="left:657px;top:103px;width:1px;height:20px;background:#fff"></div>
<div style="left:661px;top:102px;width:22px;height:22px;background:#eae8e3;border:1px solid;border-color:#808080 #fff #fff #808080"></div>
<svg class="i" style="left:665px;top:106px" width="14" height="14" viewBox="0 0 14 14" ><rect x="1" y="1" width="1" height="1" fill="#283878"/><rect x="1" y="4" width="1" height="1" fill="#283878"/><rect x="1" y="7" width="1" height="1" fill="#283878"/><rect x="1" y="10" width="1" height="1" fill="#283878"/><rect x="1" y="13" width="1" height="1" fill="#283878"/><rect x="4" y="1" width="1" height="1" fill="#283878"/><rect x="4" y="4" width="1" height="1" fill="#283878"/><rect x="4" y="7" width="1" height="1" fill="#283878"/><rect x="4" y="10" width="1" height="1" fill="#283878"/><rect x="4" y="13" width="1" height="1" fill="#283878"/><rect x="7" y="1" width="1" height="1" fill="#283878"/><rect x="7" y="4" width="1" height="1" fill="#283878"/><rect x="7" y="7" width="1" height="1" fill="#283878"/><rect x="7" y="10" width="1" height="1" fill="#283878"/><rect x="7" y="13" width="1" height="1" fill="#283878"/><rect x="10" y="1" width="1" height="1" fill="#283878"/><rect x="10" y="4" width="1" height="1" fill="#283878"/><rect x="10" y="7" width="1" height="1" fill="#283878"/><rect x="10" y="10" width="1" height="1" fill="#283878"/><rect x="10" y="13" width="1" height="1" fill="#283878"/><rect x="13" y="1" width="1" height="1" fill="#283878"/><rect x="13" y="4" width="1" height="1" fill="#283878"/><rect x="13" y="7" width="1" height="1" fill="#283878"/><rect x="13" y="10" width="1" height="1" fill="#283878"/><rect x="13" y="13" width="1" height="1" fill="#283878"/></svg>
<div class="" style="left:8px;top:129px;width:1px;height:19px;background:#fff"></div>
<div class="" style="left:9px;top:129px;width:1px;height:19px;background:#d4d0c8"></div>
<div class="" style="left:10px;top:129px;width:1px;height:19px;background:#808080"></div>
<div class="" style="left:8px;top:129px;width:2px;height:1px;background:#fff"></div>
<div class="" style="left:8px;top:147px;width:3px;height:1px;background:#808080"></div>
<div class="" style="left:18px;top:130px;width:234px;height:17px;border:1px solid #fff"></div>
<div class="" style="left:239px;top:131px;width:1px;height:15px;background:#fff"></div>
<svg class="i" style="left:243px;top:137px" width="5" height="3" viewBox="0 0 5 3" ><path d="M0 0h5l-2.5 3z" fill="#000"/></svg>
<div class="" style="left:257px;top:130px;width:55px;height:17px;border:1px solid #fff"></div>
<div class="" style="left:298px;top:131px;width:1px;height:15px;background:#fff"></div>
<svg class="i" style="left:302px;top:137px" width="5" height="3" viewBox="0 0 5 3" ><path d="M0 0h5l-2.5 3z" fill="#000"/></svg>
<div class="t" style="left:262px;top:130.5px;line-height:16px;font-size:11px;color:#808080;">9</div>
<svg class="i" style="left:320px;top:131px" width="15" height="16" viewBox="0 0 15 16" ><text x="7.500" y="10.500" font-family="Liberation Serif,serif" font-size="15.500" fill="#a0a0a0" text-anchor="middle">A</text><path d="M2 11.500h11" stroke="#a8a8a8"/><rect x="1" y="13" width="13" height="3" fill="#909090"/></svg>
<svg class="i" style="left:341px;top:138px" width="5" height="3" viewBox="0 0 5 3" ><path d="M0 0h5l-2.5 3z" fill="#808080"/></svg>
<div class="" style="left:352px;top:129px;width:1px;height:20px;background:#808080"></div>
<div class="" style="left:353px;top:129px;width:1px;height:20px;background:#fff"></div>
<svg class="i" style="left:361px;top:133px" width="11" height="12" viewBox="0 0 11 12" ><text x="5.500" y="11" font-family="Liberation Serif,serif" font-size="14" font-weight="bold" fill="#808080" stroke="#808080" stroke-width=".400" text-anchor="middle">B</text></svg>
<svg class="i" style="left:383px;top:133px" width="11" height="12" viewBox="0 0 11 12" ><text x="5.500" y="11" font-family="Liberation Serif,serif" font-size="14" font-weight="bold" font-style="italic" fill="#808080" stroke="#808080" stroke-width=".500" text-anchor="middle">I</text></svg>
<svg class="i" style="left:406px;top:132px" width="11" height="14" viewBox="0 0 11 14" ><text x="5.500" y="10.500" font-family="Liberation Serif,serif" font-size="13" font-weight="bold" fill="#808080" stroke="#808080" stroke-width=".300" text-anchor="middle">U</text><path d="M1 13h9" stroke="#8c8c8c" stroke-width="1.300"/></svg>
<div class="" style="left:425px;top:129px;width:1px;height:20px;background:#808080"></div>
<div class="" style="left:426px;top:129px;width:1px;height:20px;background:#fff"></div>
<div style="left:430px;top:128px;width:22px;height:21px;background:#eae8e3;border:1px solid;border-color:#808080 #fff #fff #808080"></div>
<svg class="i" style="left:434px;top:134px" width="14" height="13" viewBox="0 0 14 13" ><rect x="0" y="0" width="14" height="1" fill="#585858"/><rect x="0" y="2" width="10" height="1" fill="#585858"/><rect x="0" y="5" width="14" height="1" fill="#585858"/><rect x="0" y="7" width="9" height="1" fill="#585858"/><rect x="0" y="10" width="14" height="1" fill="#585858"/><rect x="0" y="12" width="11" height="1" fill="#585858"/></svg>
<svg class="i" style="left:456px;top:134px" width="14" height="13" viewBox="0 0 14 13" ><rect x="0" y="0" width="14" height="1" fill="#585858"/><rect x="2" y="2" width="10" height="1" fill="#585858"/><rect x="0" y="5" width="14" height="1" fill="#585858"/><rect x="2" y="7" width="10" height="1" fill="#585858"/><rect x="0" y="10" width="14" height="1" fill="#585858"/><rect x="2" y="12" width="10" height="1" fill="#585858"/></svg>
<svg class="i" style="left:478px;top:134px" width="14" height="13" viewBox="0 0 14 13" ><rect x="0" y="0" width="14" height="1" fill="#585858"/><rect x="4" y="2" width="10" height="1" fill="#585858"/><rect x="0" y="5" width="14" height="1" fill="#585858"/><rect x="5" y="7" width="9" height="1" fill="#585858"/><rect x="0" y="10" width="14" height="1" fill="#585858"/><rect x="3" y="12" width="11" height="1" fill="#585858"/></svg>
<div class="" style="left:503px;top:129px;width:1px;height:19px;background:#fff"></div>
<div class="" style="left:504px;top:129px;width:1px;height:19px;background:#d4d0c8"></div>
<div class="" style="left:505px;top:129px;width:1px;height:19px;background:#808080"></div>
<div class="" style="left:503px;top:129px;width:2px;height:1px;background:#fff"></div>
<div class="" style="left:503px;top:147px;width:3px;height:1px;background:#808080"></div>
<svg class="i" style="left:510px;top:132px" width="15" height="15" viewBox="0 0 15 15" ><rect x="0" y="0" width="6" height="5" fill="url(#gD)"/><rect x="9" y="9" width="6" height="6" fill="url(#gD)"/><path d="M3 14.500l11-13" stroke="#909090" stroke-width="1.200"/></svg>
<div class="" style="left:532.5px;top:129px;width:1px;height:20px;background:#808080"></div>
<div class="" style="left:533.5px;top:129px;width:1px;height:20px;background:#fff"></div>
<svg class="i" style="left:540px;top:132px" width="15" height="15" viewBox="0 0 15 15" ><rect x="2" y="4" width="9" height="9" fill="#c4c4c4"/><rect x="0" y="6" width="8" height="8" fill="url(#gD)"/><path d="M13.500 1v7" stroke="#909090" stroke-dasharray="2 1"/><path d="M12 2.500l1.500-2 1.500 2" stroke="#909090" fill="none"/></svg>
<svg class="i" style="left:562px;top:132px" width="15" height="15" viewBox="0 0 15 15" ><rect x="2" y="3" width="9" height="8" fill="#c4c4c4"/><rect x="0" y="0" width="9" height="8" fill="url(#gD)"/><path d="M13.500 6v8" stroke="#909090" stroke-dasharray="2 1"/><path d="M12 12.500l1.500 2 1.500-2" stroke="#909090" fill="none"/></svg>
<svg class="i" style="left:584px;top:132px" width="15" height="15" viewBox="0 0 15 15" ><rect x="3" y="2" width="9" height="9" fill="#c4c4c4"/><rect x="5" y="0" width="9" height="9" fill="url(#gD)"/><path d="M1 13.500h8" stroke="#909090" stroke-dasharray="2 1"/><path d="M2.500 12l-2 1.500 2 1.500" stroke="#909090" fill="none"/></svg>
<svg class="i" style="left:607px;top:132px" width="14" height="15" viewBox="0 0 14 15" ><rect x="2" y="2" width="9" height="9" fill="#c4c4c4"/><rect x="0" y="0" width="9" height="9" fill="url(#gD)"/><path d="M5 13.500h8" stroke="#909090" stroke-dasharray="2 1"/><path d="M11.500 12l2 1.500-2 1.500" stroke="#909090" fill="none"/></svg>
<div class="" style="left:628.5px;top:129px;width:1px;height:20px;background:#808080"></div>
<div class="" style="left:629.5px;top:129px;width:1px;height:20px;background:#fff"></div>
<svg class="i" style="left:638px;top:131px" width="15" height="16" viewBox="0 0 15 16" ><rect x="4" y="2" width="9" height="8" fill="#c8c8c8"/><rect x="2" y="0" width="9" height="8" fill="url(#gD)"/><rect x="0" y="12" width="15" height="4" fill="#808080"/></svg>
<svg class="i" style="left:660px;top:138px" width="5" height="3" viewBox="0 0 5 3" ><path d="M0 0h5l-2.5 3z" fill="#808080"/></svg>
<div class="" style="left:5px;top:152px;width:200px;height:18px;background:#808080"></div>
<div class="t" style="left:9px;top:153.5px;line-height:16px;font-size:11px;color:#d4d0c8;letter-spacing:-0.311px;">Organizer</div>
<svg class="i" style="left:174px;top:157px" width="9" height="10" viewBox="0 0 9 10" ><path d="M2.500 0.500h4v5h-4zM5.500 0.500v5" fill="none" stroke="#fff" stroke-width="1.200"/><path d="M0.500 6h8M4.500 6v4" stroke="#fff" stroke-width="1.300"/></svg>
<svg class="i" style="left:190px;top:158px" width="9" height="9" viewBox="0 0 9 9" ><path d="M0.500 0.500l8 8M8.500 0.500l-8 8" stroke="#fff" stroke-width="1.500"/></svg>
<div class="ts" style="left:6px;top:172px;width:199px;height:160px;background:transparent"></div>
<div class="sk" style="left:7px;top:174px;width:195px;height:157px;background:#fff"></div>
<div class="dith" style="left:184px;top:176px;width:16px;height:153px;"></div>
<div class="rb" style="left:184px;top:176px;width:16px;height:16px;background:#d4d0c8"></div>
<svg class="i" style="left:188px;top:181px" width="8" height="5" viewBox="0 0 8 5" ><path d="M0 4.5h8l-4-4.500z" fill="#000"/></svg>
<div class="rb" style="left:184px;top:313px;width:16px;height:16px;background:#d4d0c8"></div>
<svg class="i" style="left:188px;top:319px" width="8" height="5" viewBox="0 0 8 5" ><path d="M0 0h8l-4 4.500z" fill="#000"/></svg>
<div class="rb" style="left:184px;top:192px;width:16px;height:61px;background:#d4d0c8"></div>
<div style="left:9px;top:176px;width:175px;height:153px;overflow:hidden">
<div style="left:9px;top:14px;width:1px;height:146px;background-image:linear-gradient(#808080 50%,transparent 0);background-size:1px 2px"></div>
<div style="left:28px;top:30px;width:1px;height:130px;background-image:linear-gradient(#808080 50%,transparent 0);background-size:1px 2px"></div>
<div style="left:47px;top:33px;width:1px;height:56px;background-image:linear-gradient(#808080 50%,transparent 0);background-size:1px 2px"></div>
<div style="left:66px;top:65px;width:1px;height:8px;background-image:linear-gradient(#808080 50%,transparent 0);background-size:1px 2px"></div>
<div style="left:47px;top:129px;width:1px;height:31px;background-image:linear-gradient(#808080 50%,transparent 0);background-size:1px 2px"></div>
<div style="left:14px;top:9px;width:8px;height:1px;background-image:linear-gradient(90deg,#808080 50%,transparent 0);background-size:2px 1px"></div>
<svg class="i" style="left:5px;top:5px" width="9" height="9" viewBox="0 0 9 9" ><rect x="0.5" y="0.5" width="8" height="8" fill="#fff" stroke="#808080"/><path d="M2 4.5h5" stroke="#000"/></svg>
<svg class="i" style="left:20px;top:1px" width="17" height="16" viewBox="0 0 17 16" ><path d="M8.500 0l2 4.500 5.500.500-4 4 1.500 5-5-2.500z" fill="#2878f0"/><path d="M8.500 2l1.500 3.500 3.500.500-2.500 3 1 3-3.500-2z" fill="#70b0f8"/><rect x="0.500" y="5.500" width="3" height="10" fill="#e0e0e0" stroke="#a0a0a0" stroke-width=".600"/><rect x="4" y="3.500" width="3.500" height="12" fill="#f0f0f0" stroke="#a0a0a0" stroke-width=".600"/><rect x="8" y="5.500" width="3" height="10" fill="#c8c8c8" stroke="#909090" stroke-width=".600"/><path d="M0.500 9.500h7M0.500 12.500h7" stroke="#b0b0b0" stroke-width=".600"/></svg>
<div class="t" style="left:42px;top:1.0px;line-height:16px;font-size:11px;color:#000;letter-spacing:-0.277px;">Dominio: Proyecto1</div>
<div style="left:33px;top:25px;width:8px;height:1px;background-image:linear-gradient(90deg,#808080 50%,transparent 0);background-size:2px 1px"></div>
<svg class="i" style="left:24px;top:21px" width="9" height="9" viewBox="0 0 9 9" ><rect x="0.5" y="0.5" width="8" height="8" fill="#fff" stroke="#808080"/><path d="M2 4.5h5" stroke="#000"/></svg>
<div class="" style="left:59px;top:17px;width:69px;height:16px;background:#d4d0c8"></div>
<svg class="i" style="left:41px;top:18px" width="12" height="13" viewBox="0 0 12 13" ><rect x="0.5" y="0.5" width="11" height="12" fill="url(#gW)" stroke="#4868b0"/><rect x="0" y="0" width="12" height="3" fill="url(#gT)"/><path d="M2 5.500h1.500M5 5.500h5M2 7.500h1.500M5 7.500h5M2 9.500h1.500M5 9.500h5" stroke="#2858c8" stroke-width="1.200"/></svg>
<div class="t" style="left:61px;top:17.0px;line-height:16px;font-size:11px;color:#000;letter-spacing:-0.298px;">Configuración</div>
<div style="left:48px;top:41px;width:12px;height:1px;background-image:linear-gradient(90deg,#808080 50%,transparent 0);background-size:2px 1px"></div>
<svg class="i" style="left:60px;top:33px" width="13" height="16" viewBox="0 0 13 16" ><rect x="0.5" y="0.5" width="6" height="10" fill="#dce0e8" stroke="#7888a0" stroke-width=".800"/><path d="M0.5 4.5h6" stroke="#7888a0" stroke-width=".800"/><rect x="2" y="7.5" width="1.500" height="1.500" fill="#20a020"/><rect x="5.5" y="4.5" width="6" height="11" fill="#dce0e8" stroke="#7888a0" stroke-width=".800"/><path d="M5.5 8.5h6" stroke="#7888a0" stroke-width=".800"/><rect x="7" y="12.5" width="1.500" height="1.500" fill="#20a020"/></svg>
<div class="t" style="left:80px;top:33.0px;line-height:16px;font-size:11px;color:#000;letter-spacing:-0.258px;">Servidores</div>
<div style="left:52px;top:57px;width:8px;height:1px;background-image:linear-gradient(90deg,#808080 50%,transparent 0);background-size:2px 1px"></div>
<svg class="i" style="left:43px;top:53px" width="9" height="9" viewBox="0 0 9 9" ><rect x="0.5" y="0.5" width="8" height="8" fill="#fff" stroke="#808080"/><path d="M2 4.5h5" stroke="#000"/></svg>
<svg class="i" style="left:58px;top:51px" width="16" height="12" viewBox="0 0 16 12" ><path d="M0.500 11.500v-10.500h5l1 1.500h9v9z" fill="url(#gY)" stroke="#b08828" stroke-width=".800"/><path d="M15 3v8.500h-14" fill="none" stroke="#806010" stroke-width="1.200"/><path d="M1 3.500h13.500" stroke="#fff8d0"/></svg>
<div class="t" style="left:80px;top:49.0px;line-height:16px;font-size:11px;color:#000;letter-spacing:-0.147px;">Archivos</div>
<div style="left:67px;top:73px;width:12px;height:1px;background-image:linear-gradient(90deg,#808080 50%,transparent 0);background-size:2px 1px"></div>
<svg class="i" style="left:77px;top:66px" width="16" height="14" viewBox="0 0 16 14" ><rect x="2" y="0" width="14" height="3" fill="#2040b0"/><rect x="2.500" y="2.500" width="13" height="10" fill="#e8f0ff" stroke="#3050a0"/><rect x="9.500" y="4" width="5" height="7.500" fill="#fff" stroke="#506090" stroke-width=".700"/><rect x="11" y="8" width="2" height="2" fill="#3050a0"/><path d="M11 4v3.500M13 4v3.500" stroke="#506090" stroke-width=".700"/><rect x="0.500" y="5.500" width="5" height="8" fill="#fff" stroke="#4870c0" stroke-width=".800"/><rect x="3.500" y="4.500" width="5" height="9" fill="#fff" stroke="#4870c0" stroke-width=".800"/><path d="M5 7.500h2.500M5 9.500h2.500M5 11.500h2.500" stroke="#3060d0"/></svg>
<div class="t" style="left:99px;top:65.0px;line-height:16px;font-size:11px;color:#000;letter-spacing:-0.199px;">proyecto1.prj</div>
<div style="left:48px;top:89px;width:12px;height:1px;background-image:linear-gradient(90deg,#808080 50%,transparent 0);background-size:2px 1px"></div>
<svg class="i" style="left:58px;top:83px" width="16" height="12" viewBox="0 0 16 12" ><path d="M0.500 11.500v-10.500h5l1 1.500h9v9z" fill="url(#gY)" stroke="#b08828" stroke-width=".800"/><path d="M15 3v8.500h-14" fill="none" stroke="#806010" stroke-width="1.200"/><path d="M1 3.500h13.500" stroke="#fff8d0"/></svg>
<div class="t" style="left:80px;top:81.0px;line-height:16px;font-size:11px;color:#000;letter-spacing:-0.307px;">Dominios Remotos</div>
<div style="left:33px;top:105px;width:8px;height:1px;background-image:linear-gradient(90deg,#808080 50%,transparent 0);background-size:2px 1px"></div>
<svg class="i" style="left:24px;top:101px" width="9" height="9" viewBox="0 0 9 9" ><rect x="0.5" y="0.5" width="8" height="8" fill="#fff" stroke="#808080"/><path d="M2 4.5h5" stroke="#000"/><path d="M4.5 2v5" stroke="#000"/></svg>
<svg class="i" style="left:39px;top:98px" width="16" height="15" viewBox="0 0 16 15" ><rect x="2" y="0" width="14" height="3" fill="#1838b0"/><rect x="2.500" y="2.500" width="13" height="10" fill="#e8f0ff" stroke="#3050a0"/><rect x="9.500" y="4" width="5" height="7.500" fill="#fff" stroke="#506090" stroke-width=".700"/><rect x="11" y="8" width="2" height="2" fill="#3050a0"/><path d="M11 4v3.500M13 4v3.500" stroke="#506090" stroke-width=".700"/><rect x="0.500" y="5" width="2.500" height="9.500" fill="#8070e0" stroke="#5040a0" stroke-width=".600"/><rect x="3" y="4" width="5" height="10.500" fill="#48c048" stroke="#208020" stroke-width=".800"/><path d="M4 6.500h3M4 9h3M4 11.500h3" stroke="#c0f0c0"/></svg>
<div class="t" style="left:61px;top:97.0px;line-height:16px;font-size:11px;color:#000;letter-spacing:-0.202px;">Bibliotecas de Objetos</div>
<div style="left:33px;top:121px;width:8px;height:1px;background-image:linear-gradient(90deg,#808080 50%,transparent 0);background-size:2px 1px"></div>
<svg class="i" style="left:24px;top:117px" width="9" height="9" viewBox="0 0 9 9" ><rect x="0.5" y="0.5" width="8" height="8" fill="#fff" stroke="#808080"/><path d="M2 4.5h5" stroke="#000"/></svg>
<svg class="i" style="left:40px;top:114px" width="13" height="14" viewBox="0 0 13 14" ><rect x="0.500" y="0.500" width="12" height="10" fill="#e4e4e4" stroke="#a8a8a8"/><rect x="2" y="2" width="9" height="7" fill="#2858b0"/><path d="M2 9l9-7v7z" fill="#5080d0"/><path d="M5.500 3.500l3-1" stroke="#c0d8ff"/><path d="M2.500 13.500h8l-2-2.500h-4z" fill="#303030"/></svg>
<div class="t" style="left:61px;top:113.0px;line-height:16px;font-size:11px;color:#000;letter-spacing:-0.231px;">Visualización</div>
<div style="left:52px;top:137px;width:8px;height:1px;background-image:linear-gradient(90deg,#808080 50%,transparent 0);background-size:2px 1px"></div>
<svg class="i" style="left:43px;top:133px" width="9" height="9" viewBox="0 0 9 9" ><rect x="0.5" y="0.5" width="8" height="8" fill="#fff" stroke="#808080"/><path d="M2 4.5h5" stroke="#000"/><path d="M4.5 2v5" stroke="#000"/></svg>
<svg class="i" style="left:60px;top:130px" width="13" height="14" viewBox="0 0 13 14" ><rect x="0.500" y="0.500" width="12" height="10" fill="#e4e4e4" stroke="#a8a8a8"/><rect x="2" y="2" width="9" height="7" fill="#2858b0"/><path d="M2 9l9-7v7z" fill="#5080d0"/><path d="M5.500 3.500l3-1" stroke="#c0d8ff"/><path d="M2.500 13.500h8l-2-2.500h-4z" fill="#303030"/></svg>
<div class="t" style="left:80px;top:129.0px;line-height:16px;font-size:11px;color:#000;letter-spacing:-0.288px;">Viewer y Cuadros</div>
<div style="left:52px;top:153px;width:8px;height:1px;background-image:linear-gradient(90deg,#808080 50%,transparent 0);background-size:2px 1px"></div>
<svg class="i" style="left:43px;top:149px" width="9" height="9" viewBox="0 0 9 9" ><rect x="0.5" y="0.5" width="8" height="8" fill="#fff" stroke="#808080"/><path d="M2 4.5h5" stroke="#000"/><path d="M4.5 2v5" stroke="#000"/></svg>
<svg class="i" style="left:58px;top:145px" width="17" height="16" viewBox="0 0 17 16" ><rect x="0.5" y="0.5" width="11" height="8" fill="url(#gW)" stroke="#4868b0"/><rect x="0" y="0" width="12" height="3" fill="url(#gT)"/><rect x="4.5" y="5.5" width="11" height="8" fill="url(#gW)" stroke="#4868b0"/><rect x="4" y="5" width="12" height="3" fill="url(#gT)"/><circle cx="7.500" cy="1.500" r=".800" fill="#f04040"/><circle cx="9.500" cy="1.500" r=".800" fill="#f0c030"/><circle cx="11.500" cy="6.500" r=".800" fill="#f04040"/><circle cx="13.500" cy="6.500" r=".800" fill="#f0c030"/></svg>
<div class="t" style="left:80px;top:145.0px;line-height:16px;font-size:11px;color:#000;letter-spacing:-0.250px;">Pantallas</div>
</div>
<div class="" style="left:83px;top:332px;width:121px;height:1px;background:#404040"></div>
<div style="left:83px;top:333px;width:62px;height:21px;background:#d4d0c8;border:1px solid;border-color:transparent #404040 #404040 #fff;border-top:none;border-radius:0 0 4px 4px;box-shadow:inset -1px -1px 0 #808080"></div>
<div style="left:6px;top:331px;width:77px;height:24px;background:#d4d0c8;border:1px solid;border-color:#d4d0c8 #404040 #404040 #fff;border-top:none;border-radius:0 0 4px 4px;box-shadow:inset -1px -1px 0 #808080"></div>
<svg class="i" style="left:11px;top:335px" width="16" height="16" viewBox="0 0 16 16" ><rect x="0.5" y="0.5" width="12" height="12" fill="url(#gW)" stroke="#4868b0"/><rect x="0" y="0" width="13" height="3" fill="url(#gT)"/><path d="M7.500 4.500v9M7.500 8.500h4" stroke="#606060" fill="none"/><path d="M7.500 1l3 3-3 3-3-3z" fill="#f0c040" stroke="#b08820" stroke-width=".500"/><path d="M12.500 5.500l3 3-3 3-3-3z" fill="#f050d0" stroke="#b030a0" stroke-width=".500"/><path d="M12.500 10.500l3 2.700-3 2.700-3-2.700z" fill="#50a0f0" stroke="#2868b8" stroke-width=".500"/></svg>
<div class="t" style="left:28px;top:335.5px;line-height:16px;font-size:11px;color:#000;letter-spacing:-0.144px;">Organizer</div>
<svg class="i" style="left:87px;top:336px" width="16" height="16" viewBox="0 0 16 16" ><rect x="0.5" y="0.5" width="14" height="12" fill="url(#gW)" stroke="#4868b0"/><rect x="0" y="0" width="15" height="3" fill="url(#gT)"/><path d="M5.500 7.500h4.500v2.500l2-2.500h3.500v8h-10z" fill="#4cb030" stroke="#287818"/><path d="M5.500 7.500h4.500v3l-2 1.500 2 1.500v2h-4.500z" fill="#f0c838" stroke="#a88818"/></svg>
<div class="t" style="left:105px;top:335.5px;line-height:16px;font-size:11px;color:#000;letter-spacing:-0.582px;">Galería</div>
<div class="" style="left:5px;top:361px;width:200px;height:17px;background:#808080"></div>
<div class="t" style="left:9px;top:361.5px;line-height:16px;font-size:11px;color:#d4d0c8;letter-spacing:-0.103px;">'PantallaInicial' (Panel.Screen) ...</div>
<svg class="i" style="left:174px;top:364px" width="9" height="10" viewBox="0 0 9 10" ><path d="M2.500 0.500h4v5h-4zM5.500 0.500v5" fill="none" stroke="#fff" stroke-width="1.200"/><path d="M0.500 6h8M4.500 6v4" stroke="#fff" stroke-width="1.300"/></svg>
<svg class="i" style="left:190px;top:365px" width="9" height="9" viewBox="0 0 9 9" ><path d="M0.500 0.500l8 8M8.500 0.500l-8 8" stroke="#fff" stroke-width="1.500"/></svg>
<div class="sk" style="left:6px;top:380px;width:198px;height:182px;background:#d4d0c8"></div>
<div style="left:8px;top:382px;width:180px;height:163px;overflow:hidden;background:#fff">
<div class="rb" style="left:0px;top:0px;width:105px;height:17px;background:#d4d0c8"></div>
<div class="rb" style="left:105px;top:0px;width:90px;height:17px;background:#d4d0c8"></div>
<div class="t" style="left:5.5px;top:0.5px;line-height:16px;font-size:11px;color:#000;letter-spacing:-0.294px;">Propiedad</div>
<div class="t" style="left:170px;top:0.5px;line-height:16px;font-size:11px;color:#000;letter-spacing:-0.173px;">Valor</div>
<div class="" style="left:0px;top:35px;width:180px;height:1px;background:#d4d0c8"></div>
<svg class="i" style="left:3px;top:22px" width="10" height="10" viewBox="0 0 10 10" ><rect x="0" y="0" width="5" height="5" fill="#40c040"/><rect x="5" y="0" width="5" height="5" fill="#f04040"/><rect x="0" y="5" width="5" height="5" fill="#f8d830"/><rect x="5" y="5" width="5" height="5" fill="#3878e8"/></svg>
<div class="t" style="left:17.5px;top:19.0px;line-height:16px;font-size:11px;color:#000;letter-spacing:-0.199px;">BackgroundColor</div>
<div class="" style="left:108px;top:23px;width:10px;height:9px;background:#d4d0c8;border:1px solid #808080"></div>
<div class="t" style="left:125px;top:19.0px;line-height:16px;font-size:11px;color:#000;letter-spacing:-0.099px;">212, 208, 200</div>
<div class="" style="left:0px;top:52px;width:180px;height:1px;background:#d4d0c8"></div>
<div class="" style="left:17px;top:36px;width:88px;height:16px;background:#d4d0c8;border:1px dotted #000"></div>
<svg class="i" style="left:3px;top:39px" width="10" height="10" viewBox="0 0 10 10" ><path d="M0.500 9.500l4.500-9 4.500 9M2.500 6h5" fill="none" stroke="#3030c0" stroke-width="1.800" stroke-dasharray="1.200 1"/><path d="M0.500 9.500l4.500-9 4.500 9M2.500 6h5" fill="none" stroke="#e040e0" stroke-width="1.800" stroke-dasharray="1 1.200" stroke-dashoffset="1.100"/></svg>
<div class="t" style="left:17.5px;top:36.0px;line-height:16px;font-size:11px;color:#000;letter-spacing:-0.345px;">Caption</div>
<div class="t" style="left:107.5px;top:36.0px;line-height:16px;font-size:11px;color:#000;letter-spacing:-0.090px;">Screen Title</div>
<div class="" style="left:0px;top:69px;width:180px;height:1px;background:#d4d0c8"></div>
<svg class="i" style="left:3px;top:56px" width="10" height="10" viewBox="0 0 10 10" ><path d="M0.800 9.800l4.200-9 4.200 9M2.500 6.500h5" fill="none" stroke="#f048f0" stroke-width="1.900"/></svg>
<div class="t" style="left:17.5px;top:53.0px;line-height:16px;font-size:11px;color:#000;letter-spacing:-0.255px;">DocString</div>
<div class="" style="left:0px;top:86px;width:180px;height:1px;background:#d4d0c8"></div>
<svg class="i" style="left:0px;top:72px" width="15" height="11" viewBox="0 0 15 11" ><rect x="6.5" y="0.5" width="8" height="6" rx="1" fill="#f8d868" stroke="#a08020" stroke-width=".900"/><path d="M8.5 2.5h4M8.5 4.5h4" stroke="#806010" stroke-width=".800"/><rect x="0.5" y="4.5" width="8" height="6" rx="1" fill="#f8d868" stroke="#a08020" stroke-width=".900"/><path d="M2.5 6.5h4M2.5 8.5h4" stroke="#806010" stroke-width=".800"/></svg>
<div class="t" style="left:17.5px;top:70.0px;line-height:16px;font-size:11px;color:#000;letter-spacing:-0.445px;">FillStyle</div>
<div class="t" style="left:107.5px;top:70.0px;line-height:16px;font-size:11px;color:#000;letter-spacing:-0.030px;">11 - bkBackground</div>
<div class="" style="left:0px;top:103px;width:180px;height:1px;background:#d4d0c8"></div>
<svg class="i" style="left:3px;top:90px" width="10" height="10" viewBox="0 0 10 10" ><rect x="0" y="0" width="5" height="5" fill="#40c040"/><rect x="5" y="0" width="5" height="5" fill="#f04040"/><rect x="0" y="5" width="5" height="5" fill="#f8d830"/><rect x="5" y="5" width="5" height="5" fill="#3878e8"/></svg>
<div class="t" style="left:17.5px;top:87.0px;line-height:16px;font-size:11px;color:#000;letter-spacing:-0.343px;">ForegroundColor</div>
<div class="" style="left:108px;top:91px;width:10px;height:9px;background:#000"></div>
<div class="t" style="left:125px;top:87.0px;line-height:16px;font-size:11px;color:#000;letter-spacing:-0.083px;">0, 0, 0</div>
<div class="" style="left:0px;top:120px;width:180px;height:1px;background:#d4d0c8"></div>
<svg class="i" style="left:0px;top:106px" width="15" height="11" viewBox="0 0 15 11" ><rect x="6.5" y="0.5" width="8" height="6" rx="1" fill="#f8d868" stroke="#a08020" stroke-width=".900"/><path d="M8.5 2.5h4M8.5 4.5h4" stroke="#806010" stroke-width=".800"/><rect x="0.5" y="4.5" width="8" height="6" rx="1" fill="#f8d868" stroke="#a08020" stroke-width=".900"/><path d="M2.5 6.5h4M2.5 8.5h4" stroke="#806010" stroke-width=".800"/></svg>
<div class="t" style="left:17.5px;top:104.0px;line-height:16px;font-size:11px;color:#000;letter-spacing:-0.280px;">GradientStyle</div>
<div class="t" style="left:107.5px;top:104.0px;line-height:16px;font-size:11px;color:#000;letter-spacing:0.009px;">0 - leftToRight</div>
<div class="" style="left:0px;top:137px;width:180px;height:1px;background:#d4d0c8"></div>
<svg class="i" style="left:4px;top:124px" width="8" height="10" viewBox="0 0 8 10" ><text x="4" y="9.500" font-family="Liberation Sans,sans-serif" font-size="12.500" font-weight="bold" fill="#3050f0" text-anchor="middle">9</text></svg>
<div class="t" style="left:17.5px;top:121.0px;line-height:16px;font-size:11px;color:#000;letter-spacing:-0.299px;">Height</div>
<div class="t" style="left:107.5px;top:121.0px;line-height:16px;font-size:11px;font-weight:bold;color:#000;letter-spacing:0.883px;">9200</div>
<div class="" style="left:0px;top:154px;width:180px;height:1px;background:#d4d0c8"></div>
<svg class="i" style="left:4px;top:141px" width="8" height="10" viewBox="0 0 8 10" ><text x="4" y="9.500" font-family="Liberation Sans,sans-serif" font-size="12.500" font-weight="bold" fill="#3050f0" text-anchor="middle">9</text></svg>
<div class="t" style="left:17.5px;top:138.0px;line-height:16px;font-size:11px;color:#000;letter-spacing:-0.303px;">Layer</div>
<div class="t" style="left:107.5px;top:138.0px;line-height:16px;font-size:11px;color:#000;letter-spacing:-0.117px;">1</div>
<div class="" style="left:0px;top:171px;width:180px;height:1px;background:#d4d0c8"></div>
<svg class="i" style="left:3px;top:158px" width="10" height="10" viewBox="0 0 10 10" ><path d="M0.800 9.800l4.200-9 4.200 9M2.500 6.500h5" fill="none" stroke="#f048f0" stroke-width="1.900"/></svg>
<div class="t" style="left:17.5px;top:155.0px;line-height:16px;font-size:11px;color:#000;letter-spacing:-0.335px;">Name</div>
<div class="t" style="left:107.5px;top:155.0px;line-height:16px;font-size:11px;font-weight:bold;color:#000;letter-spacing:0.442px;">PantallaInicial</div>
<div class="" style="left:105px;top:17px;width:1px;height:160px;background:#d4d0c8"></div>
</div>
<div class="dith" style="left:188px;top:382px;width:15px;height:163px;"></div>
<div class="rb" style="left:188px;top:382px;width:15px;height:16px;background:#d4d0c8"></div>
<svg class="i" style="left:192px;top:387px" width="8" height="5" viewBox="0 0 8 5" ><path d="M0 4.5h8l-4-4.500z" fill="#000"/></svg>
<div class="rb" style="left:188px;top:529px;width:15px;height:16px;background:#d4d0c8"></div>
<svg class="i" style="left:192px;top:535px" width="8" height="5" viewBox="0 0 8 5" ><path d="M0 0h8l-4 4.500z" fill="#000"/></svg>
<div class="rb" style="left:188px;top:398px;width:15px;height:66px;background:#d4d0c8"></div>
<div class="dith" style="left:8px;top:545px;width:180px;height:15px;"></div>
<div class="rb" style="left:8px;top:545px;width:17px;height:15px;background:#d4d0c8"></div>
<svg class="i" style="left:13px;top:549px" width="4" height="7" viewBox="0 0 4 7" ><path d="M4 0v7l-3.5-3.5z" fill="#000"/></svg>
<div class="rb" style="left:171px;top:545px;width:17px;height:15px;background:#d4d0c8"></div>
<svg class="i" style="left:178px;top:549px" width="4" height="7" viewBox="0 0 4 7" ><path d="M0 0v7l3.5-3.5z" fill="#000"/></svg>
<div class="rb" style="left:25px;top:545px;width:131px;height:15px;background:#d4d0c8"></div>
<div class="" style="left:188px;top:545px;width:15px;height:15px;background:#d4d0c8"></div>
<div class="" style="left:210px;top:153px;width:1px;height:408px;background:#fff"></div>
<div class="" style="left:210px;top:153px;width:577px;height:1px;background:#fff"></div>
<div class="" style="left:786px;top:153px;width:1px;height:408px;background:#fff"></div>
<div class="" style="left:787px;top:153px;width:1px;height:408px;background:#eceae6"></div>
<div class="" style="left:210px;top:560px;width:578px;height:1px;background:#fff"></div>
<div class="" style="left:210px;top:561px;width:578px;height:1px;background:#eceae6"></div>
<div class="" style="left:209px;top:153px;width:1px;height:408px;background:#b8b4ac"></div>
<div class="" style="left:210px;top:153px;width:110px;height:23px;background:#d4d0c8;border:1px solid;border-color:#fff #404040 transparent #fff;box-shadow:inset -1px 0 0 #808080;border-radius:2px 0 0 0"></div>
<svg class="i" style="left:216px;top:158px" width="14" height="13" viewBox="0 0 14 13" ><rect x="0.500" y="0.500" width="13" height="12" fill="url(#gW)" stroke="#4060a8"/><rect x="0" y="0" width="14" height="3" fill="url(#gT)"/><circle cx="9" cy="1.500" r=".700" fill="#f0d040"/><circle cx="11" cy="1.500" r=".700" fill="#f03030"/><circle cx="12.700" cy="1.500" r=".600" fill="#f0d040"/><rect x="7" y="7" width="6" height="5" fill="#fff" opacity=".700"/></svg>
<div class="t" style="left:233px;top:156.5px;line-height:16px;font-size:11px;font-weight:bold;color:#000;letter-spacing:0.442px;">PantallaInicial</div>
<div class="rb" style="left:734px;top:156px;width:15px;height:15px;background:#d4d0c8"></div>
<svg class="i" style="left:737px;top:159px" width="9" height="9" viewBox="0 0 9 9" ><path d="M6.500 0.500v8l-5-4z" fill="none" stroke="#000"/></svg>
<div class="rb" style="left:752px;top:156px;width:15px;height:15px;background:#d4d0c8"></div>
<svg class="i" style="left:755px;top:159px" width="9" height="9" viewBox="0 0 9 9" ><path d="M2.500 0.500v8l5-4z" fill="none" stroke="#000"/></svg>
<div class="rb" style="left:770px;top:156px;width:15px;height:15px;background:#d4d0c8"></div>
<svg class="i" style="left:773px;top:159px" width="9" height="9" viewBox="0 0 9 9" ><path d="M0.500 0.500l8 8M8.500 0.500l-8 8" stroke="#000" stroke-width="1.400"/></svg>
<div class="" style="left:211px;top:176px;width:575px;height:1px;background:#fff"></div>
<div class="" style="left:211px;top:177px;width:574px;height:367px;background:#808080;border:1px solid;border-color:#404040 #808080 #404040 #404040;border-left:1px solid #808080;box-shadow:inset 1px 0 0 #404040"></div>
<svg class="i" style="left:219px;top:184px" width="555" height="351" viewBox="0 0 555 351"><defs><g id="dr" fill="#8e8e8a"><rect x="0" y="0" width="1" height="1"/><rect x="8" y="0" width="1" height="1"/><rect x="15" y="0" width="1" height="1"/><rect x="23" y="0" width="1" height="1"/><rect x="30" y="0" width="1" height="1"/><rect x="38" y="0" width="1" height="1"/><rect x="45" y="0" width="1" height="1"/><rect x="53" y="0" width="1" height="1"/><rect x="60" y="0" width="1" height="1"/><rect x="68" y="0" width="1" height="1"/><rect x="76" y="0" width="1" height="1"/><rect x="83" y="0" width="1" height="1"/><rect x="91" y="0" width="1" height="1"/><rect x="98" y="0" width="1" height="1"/><rect x="106" y="0" width="1" height="1"/><rect x="113" y="0" width="1" height="1"/><rect x="121" y="0" width="1" height="1"/><rect x="129" y="0" width="1" height="1"/><rect x="136" y="0" width="1" height="1"/><rect x="144" y="0" width="1" height="1"/><rect x="151" y="0" width="1" height="1"/><rect x="159" y="0" width="1" height="1"/><rect x="166" y="0" width="1" height="1"/><rect x="174" y="0" width="1" height="1"/><rect x="182" y="0" width="1" height="1"/><rect x="189" y="0" width="1" height="1"/><rect x="197" y="0" width="1" height="1"/><rect x="204" y="0" width="1" height="1"/><rect x="212" y="0" width="1" height="1"/><rect x="219" y="0" width="1" height="1"/><rect x="227" y="0" width="1" height="1"/><rect x="234" y="0" width="1" height="1"/><rect x="242" y="0" width="1" height="1"/><rect x="250" y="0" width="1" height="1"/><rect x="257" y="0" width="1" height="1"/><rect x="265" y="0" width="1" height="1"/><rect x="272" y="0" width="1" height="1"/><rect x="280" y="0" width="1" height="1"/><rect x="287" y="0" width="1" height="1"/><rect x="295" y="0" width="1" height="1"/><rect x="302" y="0" width="1" height="1"/><rect x="310" y="0" width="1" height="1"/><rect x="318" y="0" width="1" height="1"/><rect x="325" y="0" width="1" height="1"/><rect x="333" y="0" width="1" height="1"/><rect x="340" y="0" width="1" height="1"/><rect x="348" y="0" width="1" height="1"/><rect x="355" y="0" width="1" height="1"/><rect x="363" y="0" width="1" height="1"/><rect x="371" y="0" width="1" height="1"/><rect x="378" y="0" width="1" height="1"/><rect x="386" y="0" width="1" height="1"/><rect x="393" y="0" width="1" height="1"/><rect x="401" y="0" width="1" height="1"/><rect x="408" y="0" width="1" height="1"/><rect x="416" y="0" width="1" height="1"/><rect x="424" y="0" width="1" height="1"/><rect x="431" y="0" width="1" height="1"/><rect x="439" y="0" width="1" height="1"/><rect x="446" y="0" width="1" height="1"/><rect x="454" y="0" width="1" height="1"/><rect x="461" y="0" width="1" height="1"/><rect x="469" y="0" width="1" height="1"/><rect x="476" y="0" width="1" height="1"/><rect x="484" y="0" width="1" height="1"/><rect x="492" y="0" width="1" height="1"/><rect x="499" y="0" width="1" height="1"/><rect x="507" y="0" width="1" height="1"/><rect x="514" y="0" width="1" height="1"/><rect x="522" y="0" width="1" height="1"/><rect x="529" y="0" width="1" height="1"/><rect x="537" y="0" width="1" height="1"/><rect x="544" y="0" width="1" height="1"/></g></defs><rect x="0" y="0" width="555" height="351" fill="#d4d0c8"/><g transform="translate(1,1)"><use href="#dr" y="0"/><use href="#dr" y="8"/><use href="#dr" y="15"/><use href="#dr" y="23"/><use href="#dr" y="30"/><use href="#dr" y="38"/><use href="#dr" y="45"/><use href="#dr" y="53"/><use href="#dr" y="60"/><use href="#dr" y="68"/><use href="#dr" y="76"/><use href="#dr" y="83"/><use href="#dr" y="91"/><use href="#dr" y="98"/><use href="#dr" y="106"/><use href="#dr" y="113"/><use href="#dr" y="121"/><use href="#dr" y="128"/><use href="#dr" y="136"/><use href="#dr" y="144"/><use href="#dr" y="151"/><use href="#dr" y="159"/><use href="#dr" y="166"/><use href="#dr" y="174"/><use href="#dr" y="181"/><use href="#dr" y="189"/><use href="#dr" y="196"/><use href="#dr" y="204"/><use href="#dr" y="212"/><use href="#dr" y="219"/><use href="#dr" y="227"/><use href="#dr" y="234"/><use href="#dr" y="242"/><use href="#dr" y="249"/><use href="#dr" y="257"/><use href="#dr" y="264"/><use href="#dr" y="272"/><use href="#dr" y="280"/><use href="#dr" y="287"/><use href="#dr" y="295"/><use href="#dr" y="302"/><use href="#dr" y="310"/><use href="#dr" y="317"/><use href="#dr" y="325"/><use href="#dr" y="332"/><use href="#dr" y="340"/></g><path d="M0.5 351V0.5H555" stroke="#404040" fill="none"/><path d="M0 350.5H554.5V0" stroke="#fff" fill="none"/></svg>
<div class="" style="left:217px;top:182px;width:7px;height:7px;background:#3060ff;border:1px solid #fff"></div>
<div class="" style="left:493px;top:182px;width:7px;height:7px;background:#3060ff;border:1px solid #fff"></div>
<div class="" style="left:769px;top:182px;width:7px;height:7px;background:#3060ff;border:1px solid #fff"></div>
<div class="" style="left:217px;top:356px;width:7px;height:7px;background:#3060ff;border:1px solid #fff"></div>
<div class="" style="left:769px;top:356px;width:7px;height:7px;background:#0000ff;border:1px solid #fff"></div>
<div class="" style="left:217px;top:530px;width:7px;height:7px;background:#3060ff;border:1px solid #fff"></div>
<div class="" style="left:493px;top:530px;width:7px;height:7px;background:#0000ff;border:1px solid #fff"></div>
<div class="" style="left:769px;top:530px;width:7px;height:7px;background:#0000ff;border:1px solid #fff"></div>
<div style="left:213px;top:545px;width:13px;height:13px;border:1px solid;border-color:#fff #404040 #404040 #fff"></div>
<svg class="i" style="left:215px;top:548px" width="8" height="8" viewBox="0 0 8 8" ><path d="M1 0v8" stroke="#585858" stroke-width="1.500"/><path d="M7 0v8l-4.500-4z" fill="#585858"/></svg>
<div style="left:229px;top:545px;width:13px;height:13px;border:1px solid;border-color:#fff #404040 #404040 #fff"></div>
<svg class="i" style="left:231px;top:548px" width="8" height="8" viewBox="0 0 8 8" ><path d="M6 0v8l-4.500-4z" fill="#585858"/></svg>
<div style="left:245px;top:545px;width:13px;height:13px;border:1px solid;border-color:#fff #404040 #404040 #fff"></div>
<svg class="i" style="left:247px;top:548px" width="8" height="8" viewBox="0 0 8 8" ><path d="M2 0v8l4.500-4z" fill="#585858"/></svg>
<div style="left:261px;top:545px;width:13px;height:13px;border:1px solid;border-color:#fff #404040 #404040 #fff"></div>
<svg class="i" style="left:263px;top:548px" width="8" height="8" viewBox="0 0 8 8" ><path d="M7 0v8" stroke="#585858" stroke-width="1.500"/><path d="M1 0v8l4.500-4z" fill="#585858"/></svg>
<svg class="i" style="left:278px;top:543px" width="116" height="16" viewBox="0 0 116 16" ><path d="M52.5 0.5 L60.5 14.5 H103.5 L111.5 0.5" fill="#d4d0c8" stroke="#000"/><path d="M2.5 0 L10.5 14.5 H52.5 L60 0 Z" fill="#fff" stroke="none"/><path d="M2.5 0.5 L10.5 14.5 H52.5 L60 0.5" fill="none" stroke="#000"/></svg>
<div class="t" style="left:289px;top:542.5px;line-height:16px;font-size:11px;font-weight:bold;color:#000;letter-spacing:-0.029px;">Design</div>
<div class="t" style="left:342.5px;top:542.5px;line-height:16px;font-size:11px;color:#000;letter-spacing:0.054px;">Scripts</div>
<div class="t" style="left:8.5px;top:567.0px;line-height:16px;font-size:11px;color:#000;letter-spacing:-0.125px;">Para Ayuda, presione F1</div>
<div class="ts" style="left:251px;top:565px;width:143px;height:19px;background:transparent"></div>
<div class="ts" style="left:396px;top:565px;width:145px;height:19px;background:transparent"></div>
<div class="ts" style="left:543px;top:565px;width:144px;height:19px;background:transparent"></div>
<div class="ts" style="left:689px;top:565px;width:24px;height:19px;background:transparent"></div>
<div class="ts" style="left:715px;top:565px;width:26px;height:19px;background:transparent"></div>
<div class="ts" style="left:743px;top:565px;width:29px;height:19px;background:transparent"></div>
<svg class="i" style="left:256px;top:568px" width="9" height="14" viewBox="0 0 9 14" ><path d="M0.500 0v11.500l2.700-2.700 2.100 5 1.900-.900-2.200-4.800h3.700z" fill="#282828"/><path d="M1.500 2.500v6.500l2-2z" fill="#686868"/></svg>
<div class="t" style="left:272.5px;top:567.0px;line-height:16px;font-size:11px;color:#000;letter-spacing:-0.005px;">4392, 7805</div>
<svg class="i" style="left:400px;top:568px" width="13" height="13" viewBox="0 0 13 13" ><rect x="5.500" y="5.500" width="7" height="7" fill="#c0c0c0" stroke="#606060" stroke-dasharray="1 1"/><path d="M4.500 0v9M0 4.500h9" stroke="#2050e0" stroke-dasharray="2 1"/></svg>
<div class="t" style="left:419px;top:567.0px;line-height:16px;font-size:11px;color:#000;letter-spacing:0.163px;">0, 0</div>
<svg class="i" style="left:546px;top:568px" width="14" height="14" viewBox="0 0 14 14" ><rect x="4.500" y="4.500" width="9" height="9" fill="#c0c0c0" stroke="#606060" stroke-dasharray="1 1"/><path d="M4 1.500h10M12 0l2 1.500-2 1.500M4.500 0v3" stroke="#2050e0" fill="none"/><path d="M1.500 5v8M0 11l1.500 2 1.500-2M0 13.500h3" stroke="#2050e0" fill="none"/></svg>
<div class="t" style="left:565px;top:567.0px;line-height:16px;font-size:11px;color:#000;letter-spacing:-0.111px;">14600,9200</div>
<div class="t" style="left:693px;top:567.0px;line-height:16px;font-size:11px;color:#808080;letter-spacing:-1.540px;">CAP</div>
<div class="t" style="left:718px;top:567.0px;line-height:16px;font-size:11px;color:#808080;letter-spacing:-1.350px;">NUM</div>
<div class="t" style="left:745.5px;top:567.0px;line-height:16px;font-size:11px;color:#808080;letter-spacing:-1.335px;">SCRL</div>
<svg class="i" style="left:778px;top:574px" width="12" height="12" viewBox="0 0 12 12" ><path d="M12 1L1 12M12 5L5 12M12 9L9 12" stroke="#808080" fill="none"/><path d="M12 0L0 12M12 4L4 12M12 8L8 12" stroke="#fff" fill="none"/></svg>
</body></html>
